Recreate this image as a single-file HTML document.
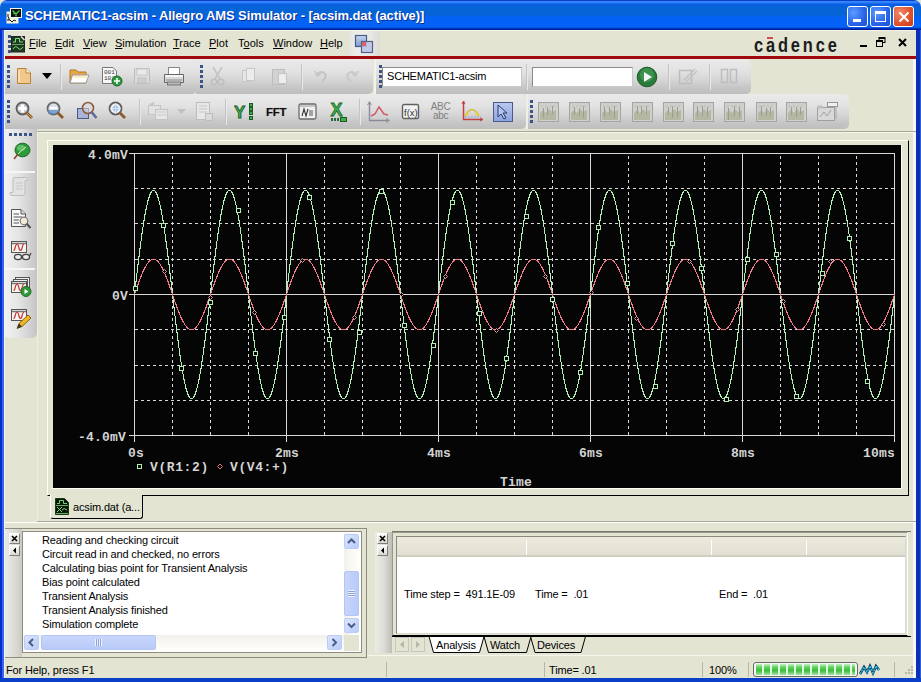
<!DOCTYPE html>
<html><head><meta charset="utf-8">
<style>
*{margin:0;padding:0;box-sizing:border-box}
html,body{width:921px;height:682px;overflow:hidden;background:#E3E4D2;font-family:"Liberation Sans",sans-serif;font-size:12px;color:#000}
.a{position:absolute}
#title{left:0;top:0;width:921px;height:30px;background:linear-gradient(#0A3EC8 0px,#0A3EC8 1px,#3A8CFF 1px,#2A7AF8 3px,#0A5CE8 4px,#0664D6 7px,#0664D6 15px,#0562F6 17px,#0562F6 27px,#0848D8 28px,#00209A 29px,#00209A 30px);border-radius:7px 7px 0 0}
#ttext{left:25px;top:8px;color:#fff;font-weight:bold;font-size:13px;letter-spacing:-0.1px;text-shadow:1px 1px 0 #0A2E8A;white-space:nowrap}
.wb{top:6px;width:21px;height:21px;border:1px solid #fff;border-radius:3px;background:radial-gradient(circle at 30% 30%,#5B9BFF,#2A63E8 60%,#1C4FD0)}
#bleft{left:0;top:30px;width:4px;height:652px;background:linear-gradient(90deg,#0030C8 0,#0030C8 2px,#3A64F0 2px,#3A64F0 4px)}
#bright{left:913px;top:30px;width:8px;height:652px;background:linear-gradient(90deg,#F4F6F8 0,#F4F6F8 3px,#0A30B8 3px,#0A30B8 7px,#3060D0 7px)}
#bbot{left:0;top:678px;width:921px;height:4px;background:#0B3FC8}
#menu{left:4px;top:30px;width:912px;height:26px;background:#E3E4D2}
.mi{top:37px;font-size:11px;white-space:nowrap}
.mi u{text-decoration:underline}
#redline{left:4px;top:56px;width:912px;height:3px;background:#A00A0E}
.tb{background:linear-gradient(#EAEAEA,#E2E2E2 35%,#D4D4D4 62%,#C6C6C6 82%,#BEBEBE);border-radius:0 4px 4px 0}
.grip{width:3px;background:repeating-linear-gradient(#3A5488 0 3px,transparent 3px 5px)}
.hgrip{height:3px;background:repeating-linear-gradient(90deg,#3A5488 0 3px,transparent 3px 5px)}
.sep{width:2px;background:linear-gradient(90deg,#C4C4C4 0 1px,#E8E8E8 1px 2px)}
.ico{position:absolute}
.plotlbl{font-family:"Liberation Mono",monospace;font-weight:bold;font-size:13px;letter-spacing:0.2px;line-height:13px;color:#D4D4D4;white-space:nowrap}
.log{font-size:11px;line-height:14px;letter-spacing:-0.15px;white-space:nowrap}
</style></head><body>
<!-- Title bar -->
<div id="title" class="a"></div>
<svg class="a" style="left:6px;top:8px" width="16" height="16"><rect x="0.5" y="3.5" width="12" height="12" fill="#F4F4D8"/><path d="M2 6 V9 L3 10 V12 M1 12 H4 L6 14 L8 12 L10 13" stroke="#111" fill="none"/><rect x="4.5" y="0.5" width="11" height="9" fill="#111" stroke="#F4F4F4"/><path d="M6.5 2.5 L10 6 L13.5 2.5 M10 6 V8.5 M7.5 5 L8.5 6" stroke="#4EC84E" stroke-width="1.3" fill="none"/></svg>
<div id="ttext" class="a">SCHEMATIC1-acsim - Allegro AMS Simulator - [acsim.dat (active)]</div>
<div class="a wb" style="left:847px"><div class="a" style="left:5px;top:12px;width:8px;height:3px;background:#fff"></div></div>
<div class="a wb" style="left:870px"><div class="a" style="left:4px;top:4px;width:11px;height:11px;border:1px solid #fff;border-top-width:3px"></div></div>
<div class="a wb" style="left:893px;background:radial-gradient(circle at 30% 30%,#F08A6A,#E0502A 60%,#C8381A)"><svg class="a" style="left:4px;top:4px" width="12" height="12"><path d="M1.5 1.5 L10.5 10.5 M10.5 1.5 L1.5 10.5" stroke="#fff" stroke-width="2"/></svg></div>
<div id="bleft" class="a"></div>
<div id="bright" class="a"></div>
<div id="bbot" class="a"></div>

<!-- Menu -->
<div id="menu" class="a"></div>
<div class="a" style="left:4px;top:30px;width:912px;height:1px;background:#F4F3EC"></div>
<div class="a grip" style="left:8px;top:35px;height:19px"></div>
<svg class="a" style="left:11px;top:36px" width="15" height="17"><rect x="0.5" y="0.5" width="13" height="15.5" fill="#1E3A1E" stroke="#222"/><path d="M10 0.5 L13.5 4" stroke="#E3E4D2" stroke-width="1.5"/><path d="M2 6 H4.5 V2.5 H8.5 V6 H12" stroke="#7EE07E" fill="none"/><path d="M2 13 Q4.5 9 7 12 T12 11" stroke="#7EE07E" fill="none"/><path d="M1 8.5 H13" stroke="#8C8" stroke-width="0.7"/></svg>
<div class="a mi" style="left:29px"><u>F</u>ile</div>
<div class="a mi" style="left:55px"><u>E</u>dit</div>
<div class="a mi" style="left:83px"><u>V</u>iew</div>
<div class="a mi" style="left:115px"><u>S</u>imulation</div>
<div class="a mi" style="left:173px"><u>T</u>race</div>
<div class="a mi" style="left:209px"><u>P</u>lot</div>
<div class="a mi" style="left:238px">T<u>o</u>ols</div>
<div class="a mi" style="left:273px"><u>W</u>indow</div>
<div class="a mi" style="left:320px"><u>H</u>elp</div>
<div class="a" style="left:349px;top:31px;width:31px;height:25px;background:linear-gradient(90deg,#E6E6E0,#EDEDEA 30%,#E8E8E4 70%,#DCDCD6)"></div>
<svg class="a" style="left:354px;top:34px" width="20" height="20"><defs><linearGradient id="sq" x1="0" y1="0" x2="0" y2="1"><stop offset="0" stop-color="#C8D8F0"/><stop offset="1" stop-color="#7A9AD0"/></linearGradient></defs><rect x="1.5" y="1.5" width="11" height="11" fill="url(#sq)" stroke="#4A5A88" stroke-width="1.2"/><rect x="7.5" y="7.5" width="11" height="11" fill="#B8C4E8" fill-opacity="0.85" stroke="#585E88" stroke-width="1.2"/><rect x="8" y="8" width="4" height="4" fill="#E06070"/></svg>
<div class="a" style="left:754px;top:34px;font-size:20px;font-weight:bold;letter-spacing:3.5px;color:#1C1C1C;line-height:23px;transform:scaleX(0.82);transform-origin:0 0">cadence</div>
<div class="a" style="left:767px;top:37px;width:6px;height:2px;background:#D84848"></div>
<div class="a" style="left:860px;top:45px;width:7px;height:2px;background:#000"></div>
<svg class="a" style="left:876px;top:37px" width="10" height="10"><rect x="3" y="0.5" width="6" height="5" fill="none" stroke="#000"/><rect x="0.5" y="3.5" width="6" height="6" fill="#E3E4D2" stroke="#000"/><path d="M0.5 4.5 H6.5 M3 1.5 H9" stroke="#000"/></svg>
<svg class="a" style="left:898px;top:38px" width="9" height="9"><path d="M1 1 L8 8 M8 1 L1 8" stroke="#000" stroke-width="2"/></svg>
<div id="redline" class="a"></div>

<!-- Row 1 bands -->
<div class="a tb" style="left:5px;top:59px;width:191px;height:35px"></div>
<div class="a tb" style="left:196px;top:59px;width:177px;height:35px;border-radius:0 5px 5px 0"></div>
<div class="a" style="left:374px;top:59px;width:2px;height:35px;background:#F4F3EA"></div>
<div class="a tb" style="left:376px;top:59px;width:375px;height:35px;border-radius:0 5px 5px 0"></div>
<div class="a grip" style="left:7px;top:65px;height:25px"></div>
<div class="a grip" style="left:200px;top:65px;height:25px"></div>
<div class="a grip" style="left:379px;top:65px;height:25px"></div>
<div class="a sep" style="left:60px;top:64px;height:26px"></div>
<div class="a sep" style="left:301px;top:64px;height:26px"></div>
<div class="a sep" style="left:526px;top:64px;height:26px"></div>
<div class="a sep" style="left:668px;top:64px;height:26px"></div>
<div class="a sep" style="left:709px;top:64px;height:26px"></div>
<!-- new -->
<svg class="a" style="left:16px;top:67px" width="16" height="18"><path d="M1.5 1.5 H10 L14.5 6 V16.5 H1.5 Z" fill="#F2C98A" stroke="#B8843A"/><path d="M10 1.5 V6 H14.5" fill="#FFF4D8" stroke="#B8843A"/><path d="M3 3 V15" stroke="#FBE3B8" stroke-width="1.5"/></svg>
<svg class="a" style="left:42px;top:72px" width="10" height="8"><path d="M0 1 H10 L5 7 Z" fill="#000"/></svg>
<!-- open -->
<svg class="a" style="left:69px;top:67px" width="21" height="18"><path d="M1 3 H7 L9 5 H17 V16 H1 Z" fill="#E8A848" stroke="#B07820"/><path d="M3.5 8 H20 L17 16 H1 Z" fill="#FFFFFF" stroke="#9A9A9A"/><path d="M5 10 H18" stroke="#F8D890"/></svg>
<!-- binary doc -->
<svg class="a" style="left:101px;top:66px" width="22" height="21"><path d="M1.5 1.5 H12 L15.5 5 V17.5 H1.5 Z" fill="#F8F8F8" stroke="#777"/><text x="3" y="8" font-size="6" font-family="Liberation Mono" fill="#333">001</text><text x="3" y="14" font-size="6" font-family="Liberation Mono" fill="#333">101</text><circle cx="16" cy="15" r="5" fill="#2E9A3E" stroke="#1A6A2A"/><path d="M16 12 V18 M13 15 H19" stroke="#fff" stroke-width="1.6"/></svg>
<!-- save disabled -->
<svg class="a" style="left:133px;top:67px" width="18" height="18"><rect x="1.5" y="1.5" width="15" height="15" rx="1" fill="#DCDCDC" stroke="#BDBDBD"/><rect x="4" y="2" width="10" height="6" fill="#EAEAEA" stroke="#C8C8C8"/><rect x="5" y="11" width="8" height="5" fill="#CFCFCF" stroke="#C0C0C0"/></svg>
<!-- printer -->
<svg class="a" style="left:163px;top:66px" width="22" height="20"><rect x="5.5" y="1.5" width="11" height="7" fill="#FFF" stroke="#888"/><path d="M1.5 8.5 H20.5 V16.5 H1.5 Z" fill="#D8D8D8" stroke="#666"/><rect x="2" y="9" width="18" height="2" fill="#F4F4F4"/><path d="M3 14 H19" stroke="#888"/><rect x="4.5" y="16" width="13" height="3" fill="#B8B8B8" stroke="#777"/></svg>
<!-- cut disabled -->
<svg class="a" style="left:209px;top:66px" width="17" height="20"><path d="M4 1 L11 13 M13 1 L6 13" stroke="#C4C4C4" stroke-width="1.5" fill="none"/><circle cx="5" cy="16" r="2.8" fill="none" stroke="#BEBEBE" stroke-width="1.5"/><circle cx="12" cy="16" r="2.8" fill="none" stroke="#BEBEBE" stroke-width="1.5"/></svg>
<!-- copy disabled -->
<svg class="a" style="left:242px;top:67px" width="14" height="18"><rect x="0.5" y="3.5" width="8" height="11" fill="#E6E6E6" stroke="#C6C6C6"/><rect x="4.5" y="1.5" width="8" height="12" fill="#ECECEC" stroke="#C6C6C6"/></svg>
<!-- paste disabled -->
<svg class="a" style="left:271px;top:66px" width="17" height="20"><rect x="1.5" y="3.5" width="12" height="15" fill="#D2D2D2" stroke="#BDBDBD"/><rect x="7.5" y="7.5" width="8" height="10" fill="#EDEDED" stroke="#C4C4C4"/></svg>
<!-- undo/redo disabled -->
<svg class="a" style="left:314px;top:69px" width="14" height="14"><path d="M3 5 Q8 1 11 5 Q13 9 8 12" stroke="#C4C4C4" stroke-width="2" fill="none"/><path d="M1 2 L3 7 L7 5" stroke="#C4C4C4" stroke-width="1.5" fill="none"/></svg>
<svg class="a" style="left:344px;top:69px" width="15" height="14"><path d="M12 5 Q7 1 4 5 Q2 9 7 12" stroke="#C8C8C8" stroke-width="2" fill="none"/><path d="M14 2 L12 7 L8 5" stroke="#C8C8C8" stroke-width="1.5" fill="none"/></svg>
<!-- text boxes -->
<div class="a" style="left:382px;top:67px;width:140px;height:20px;background:#fff;border:1px solid #8A8A8A;border-right-color:#C8C8C8;border-bottom-color:#C8C8C8"></div>
<div class="a" style="left:387px;top:70px;font-size:11px;letter-spacing:-0.2px;white-space:nowrap">SCHEMATIC1-acsim</div>
<div class="a" style="left:532px;top:67px;width:101px;height:20px;background:#fff;border:1px solid #8A8A8A;border-right-color:#C8C8C8;border-bottom-color:#C8C8C8"></div>
<!-- run -->
<svg class="a" style="left:636px;top:66px" width="22" height="22"><circle cx="11" cy="11" r="9.8" fill="#2A7A3A" stroke="#1E5A2A"/><circle cx="11" cy="9" r="7" fill="#4AA25A" opacity="0.6"/><path d="M8 6 L16 11 L8 16 Z" fill="#F4F4F4"/></svg>
<!-- disabled -->
<svg class="a" style="left:678px;top:67px" width="20" height="19"><rect x="1.5" y="3.5" width="12" height="13" fill="none" stroke="#BDBDBD" stroke-width="1.5"/><path d="M6 13 L17 2 M8 15 L19 4" stroke="#C2C2C2" stroke-width="1.5"/></svg>
<svg class="a" style="left:720px;top:68px" width="18" height="17"><rect x="1.5" y="1.5" width="6" height="13" fill="none" stroke="#BDBDBD" stroke-width="1.5"/><rect x="10.5" y="1.5" width="6" height="13" fill="none" stroke="#BDBDBD" stroke-width="1.5"/></svg>

<!-- Row 2 bands -->
<div class="a tb" style="left:5px;top:94px;width:521px;height:35px;border-radius:0 5px 5px 0"></div>
<div class="a" style="left:526px;top:94px;width:3px;height:35px;background:#F0EFE6"></div>
<div class="a tb" style="left:528px;top:94px;width:321px;height:35px;border-radius:0 5px 5px 0"></div>
<div class="a grip" style="left:7px;top:100px;height:25px"></div>
<div class="a grip" style="left:530px;top:100px;height:25px"></div>
<div class="a sep" style="left:139px;top:99px;height:26px"></div>
<div class="a sep" style="left:225px;top:99px;height:26px"></div>
<div class="a sep" style="left:359px;top:99px;height:26px"></div>
<!-- zoom icons -->
<svg class="a" style="left:15px;top:101px" width="19" height="19"><circle cx="7.5" cy="7.5" r="6" fill="#C8CCD0" stroke="#606060" stroke-width="1.8"/><path d="M7.5 3.5 V11.5 M3.5 7.5 H11.5" stroke="#FFF" stroke-width="3"/><path d="M11.5 11.5 L17 17" stroke="#8A5A2A" stroke-width="2.8"/><path d="M12 12 L17 17" stroke="#D89A50" stroke-width="1"/></svg>
<svg class="a" style="left:46px;top:101px" width="19" height="19"><circle cx="7.5" cy="7.5" r="6" fill="#D8E0EA" stroke="#6A6A6A" stroke-width="1.8"/><path d="M2 9 H13 V13 H2 Z" fill="#5A8ACA" opacity="0.7"/><path d="M4 7 H11" stroke="#fff" stroke-width="2"/><path d="M11.5 11.5 L17 17" stroke="#8A5A2A" stroke-width="2.8"/></svg>
<svg class="a" style="left:76px;top:101px" width="22" height="21"><rect x="1.5" y="7.5" width="11" height="10" fill="#A8B4D8" stroke="#4A5A8A"/><circle cx="12" cy="7" r="5.5" fill="#D8D8E0" fill-opacity="0.6" stroke="#8A5A3A" stroke-width="1.6"/><path d="M15.5 11 L20.5 17" stroke="#5A6A9A" stroke-width="2.6"/></svg>
<svg class="a" style="left:108px;top:101px" width="19" height="19"><circle cx="7.5" cy="7.5" r="6" fill="#F0F2F4" stroke="#606060" stroke-width="1.8"/><path d="M7.5 3 L11 7.5 L7.5 12 L4 7.5 Z" fill="#9CC0E8"/><path d="M7.5 2 V13 M2 7.5 H13" stroke="#D8E4F0" stroke-width="1"/><path d="M11.5 11.5 L17 17" stroke="#8A5A2A" stroke-width="2.8"/></svg>
<!-- copy disabled -->
<svg class="a" style="left:147px;top:102px" width="23" height="19"><path d="M3 3 L7 1" stroke="#C6C6C6" stroke-width="2"/><rect x="1.5" y="3.5" width="12" height="9" fill="#E2E2E2" stroke="#C4C4C4"/><rect x="8.5" y="7.5" width="12" height="10" fill="#E6E6E6" stroke="#C4C4C4"/><path d="M10 10 H19 M10 13 H19" stroke="#CACACA"/></svg>
<svg class="a" style="left:177px;top:109px" width="10" height="6"><path d="M0 0 H9 L4.5 5 Z" fill="#C0C0C0"/></svg>
<svg class="a" style="left:195px;top:101px" width="19" height="21"><rect x="1.5" y="1.5" width="13" height="17" fill="#E8E8E8" stroke="#BDBDBD"/><path d="M4 5 H12 M4 8 H12 M4 11 H12" stroke="#C6C6C6"/><rect x="10.5" y="12.5" width="7" height="7" fill="#DADADA" stroke="#BDBDBD"/></svg>
<!-- Y! -->
<svg class="a" style="left:234px;top:102px" width="22" height="20"><text x="0" y="16" font-family="Liberation Sans" font-weight="bold" font-size="17" fill="#3CB04A" stroke="#1E5A26" stroke-width="0.8">Y</text><rect x="15.5" y="1.5" width="3" height="3" fill="#3CB04A" stroke="#1E5A26"/><rect x="15.5" y="5.5" width="3" height="3" fill="#3CB04A" stroke="#1E5A26"/><rect x="15.5" y="9.5" width="3" height="3" fill="#3CB04A" stroke="#1E5A26"/><rect x="15.5" y="14.5" width="3" height="3" fill="#3CB04A" stroke="#1E5A26"/></svg>
<!-- FFT -->
<div class="a" style="left:266px;top:106px;font-weight:bold;font-size:11.5px;color:#111;letter-spacing:-0.3px;text-shadow:0 0 1px #888">FFT</div>
<!-- N= -->
<svg class="a" style="left:298px;top:103px" width="19" height="17"><rect x="1" y="1" width="17" height="15" rx="1.5" fill="#F0F0F0" stroke="#6A6A6A" stroke-width="1.3"/><path d="M2 3 H17" stroke="#9A9A9A"/><path d="M4 13 L6 6 L8 13 L10 6" stroke="#333" stroke-width="1.1" fill="none"/><path d="M11 8 H15 M11 10 H15 M11 12 H15" stroke="#555"/></svg>
<!-- X -->
<svg class="a" style="left:329px;top:100px" width="18" height="23"><text x="1.5" y="15.5" font-family="Liberation Sans" font-weight="bold" font-size="18" fill="#3CB04A" stroke="#1E6A2A" stroke-width="0.8">X</text><rect x="2" y="18" width="2" height="3" fill="#2A6A3A"/><rect x="5" y="18" width="2" height="3" fill="#2A6A3A"/><rect x="8" y="18" width="2" height="3" fill="#2A6A3A"/><rect x="11.5" y="17.5" width="6" height="4" fill="#3CB04A" stroke="#1E5A26"/></svg>
<!-- chart -->
<svg class="a" style="left:367px;top:101px" width="24" height="22"><path d="M2.5 2 V19.5 H21" stroke="#8A8A98" stroke-width="1.4" fill="none"/><path d="M0.5 4 L2.5 0.5 L4.5 4 M19 17.5 L22.5 19.5 L19 21.5" stroke="#8A8A98" fill="none"/><path d="M4 15 L8 13 L12 6 L17 13 L21 14" stroke="#D05868" stroke-width="1.5" fill="none"/></svg>
<!-- f(x) -->
<svg class="a" style="left:401px;top:103px" width="19" height="17"><rect x="1.5" y="1.5" width="16" height="14" rx="1.5" fill="#F2F2F2" stroke="#606060" stroke-width="1.4"/><text x="3" y="12.5" font-size="9.5" font-family="Liberation Sans" fill="#333">f(x)</text></svg>
<!-- ABC abc -->
<div class="a" style="left:430px;top:102px;font-size:10px;line-height:9px;color:#7E7E7E;text-align:center;width:21px;letter-spacing:-0.3px">ABC<br>abc</div>
<!-- chart2 -->
<svg class="a" style="left:461px;top:101px" width="23" height="21"><path d="M2.5 1 V18.5 H21" stroke="#C04040" stroke-width="1.5" fill="none"/><path d="M1 3 L2.5 0 L4 3 M19 17 L22 18.5 L19 20" stroke="#C04040" fill="none"/><path d="M4 15 Q11 2 18 15" stroke="#D4C040" stroke-width="1.5" fill="none"/><circle cx="6" cy="13" r="1.6" fill="#E8D040"/><circle cx="16" cy="13" r="1.6" fill="#E8D040"/><path d="M4 16 H20" stroke="#8AA0E0" stroke-dasharray="2,1"/></svg>
<!-- pointer selected -->
<div class="a" style="left:493px;top:102px;width:20px;height:20px;background:linear-gradient(#B8C8F0,#8EA4E0);border:1px solid #4A5A8A"></div>
<svg class="a" style="left:496px;top:104px" width="14" height="16"><path d="M2 1 V13 L5 10 L8 15 L10 14 L7 9 L11 9 Z" fill="#B8C4F0" stroke="#2A3A6A"/></svg>
<!-- disabled waveform boxes -->
<svg class="a" style="left:538px;top:102px" width="21" height="20"><rect x="0.5" y="0.5" width="20" height="19" fill="#CFCFCB" stroke="#A4A4A4"/><path d="M2 18 V11 L5 8 L8 11 L11 7 L14 10 L18 8 V18 Z" fill="#B4B8A0"/><rect x="5" y="6" width="1" height="10" fill="#9C9C98"/><rect x="9" y="5" width="1" height="8" fill="#9C9C98"/><rect x="14" y="4" width="1" height="8" fill="#9C9C98"/><path d="M3 4 H17" stroke="#B8B8B4" stroke-dasharray="2,2"/></svg>
<svg class="a" style="left:569px;top:102px" width="21" height="20"><rect x="0.5" y="0.5" width="20" height="19" fill="#CFCFCB" stroke="#A4A4A4"/><path d="M2 18 V11 L5 8 L8 11 L11 7 L14 10 L18 8 V18 Z" fill="#B4B8A0"/><rect x="5" y="5" width="1" height="8" fill="#9C9C98"/><rect x="10" y="6" width="1" height="8" fill="#9C9C98"/><rect x="14" y="4" width="1" height="12" fill="#9C9C98"/><path d="M3 4 H17" stroke="#B8B8B4" stroke-dasharray="2,2"/></svg>
<svg class="a" style="left:600px;top:102px" width="21" height="20"><rect x="0.5" y="0.5" width="20" height="19" fill="#CFCFCB" stroke="#A4A4A4"/><path d="M2 18 V11 L5 8 L8 11 L11 7 L14 10 L18 8 V18 Z" fill="#B4B8A0"/><rect x="4" y="5" width="1" height="10" fill="#9C9C98"/><rect x="9" y="5" width="1" height="8" fill="#9C9C98"/><rect x="14" y="4" width="1" height="12" fill="#9C9C98"/><path d="M3 4 H17" stroke="#B8B8B4" stroke-dasharray="2,2"/></svg>
<svg class="a" style="left:632px;top:102px" width="21" height="20"><rect x="0.5" y="0.5" width="20" height="19" fill="#CFCFCB" stroke="#A4A4A4"/><path d="M2 18 V11 L5 8 L8 11 L11 7 L14 10 L18 8 V18 Z" fill="#B4B8A0"/><rect x="5" y="4" width="1" height="8" fill="#9C9C98"/><rect x="9" y="4" width="1" height="8" fill="#9C9C98"/><rect x="14" y="4" width="1" height="8" fill="#9C9C98"/><path d="M3 4 H17" stroke="#B8B8B4" stroke-dasharray="2,2"/></svg>
<svg class="a" style="left:663px;top:102px" width="21" height="20"><rect x="0.5" y="0.5" width="20" height="19" fill="#CFCFCB" stroke="#A4A4A4"/><path d="M2 18 V11 L5 8 L8 11 L11 7 L14 10 L18 8 V18 Z" fill="#B4B8A0"/><rect x="5" y="5" width="1" height="8" fill="#9C9C98"/><rect x="9" y="4" width="1" height="12" fill="#9C9C98"/><rect x="14" y="5" width="1" height="10" fill="#9C9C98"/><path d="M3 4 H17" stroke="#B8B8B4" stroke-dasharray="2,2"/></svg>
<svg class="a" style="left:693px;top:102px" width="21" height="20"><rect x="0.5" y="0.5" width="20" height="19" fill="#CFCFCB" stroke="#A4A4A4"/><path d="M2 18 V11 L5 8 L8 11 L11 7 L14 10 L18 8 V18 Z" fill="#B4B8A0"/><rect x="4" y="5" width="1" height="10" fill="#9C9C98"/><rect x="9" y="4" width="1" height="10" fill="#9C9C98"/><rect x="14" y="5" width="1" height="10" fill="#9C9C98"/><path d="M3 4 H17" stroke="#B8B8B4" stroke-dasharray="2,2"/></svg>
<svg class="a" style="left:724px;top:102px" width="21" height="20"><rect x="0.5" y="0.5" width="20" height="19" fill="#CFCFCB" stroke="#A4A4A4"/><path d="M2 18 V11 L5 8 L8 11 L11 7 L14 10 L18 8 V18 Z" fill="#B4B8A0"/><rect x="4" y="6" width="1" height="12" fill="#9C9C98"/><rect x="10" y="4" width="1" height="10" fill="#9C9C98"/><rect x="15" y="5" width="1" height="10" fill="#9C9C98"/><path d="M3 4 H17" stroke="#B8B8B4" stroke-dasharray="2,2"/></svg>
<svg class="a" style="left:756px;top:102px" width="21" height="20"><rect x="0.5" y="0.5" width="20" height="19" fill="#CFCFCB" stroke="#A4A4A4"/><path d="M2 18 V11 L5 8 L8 11 L11 7 L14 10 L18 8 V18 Z" fill="#B4B8A0"/><rect x="5" y="4" width="1" height="10" fill="#9C9C98"/><rect x="10" y="6" width="1" height="8" fill="#9C9C98"/><rect x="14" y="5" width="1" height="8" fill="#9C9C98"/><path d="M3 4 H17" stroke="#B8B8B4" stroke-dasharray="2,2"/></svg>
<svg class="a" style="left:786px;top:102px" width="21" height="20"><rect x="0.5" y="0.5" width="20" height="19" fill="#CFCFCB" stroke="#A4A4A4"/><path d="M2 18 V11 L5 8 L8 11 L11 7 L14 10 L18 8 V18 Z" fill="#B4B8A0"/><rect x="5" y="5" width="1" height="8" fill="#9C9C98"/><rect x="10" y="5" width="1" height="10" fill="#9C9C98"/><rect x="14" y="5" width="1" height="8" fill="#9C9C98"/><path d="M3 4 H17" stroke="#B8B8B4" stroke-dasharray="2,2"/></svg>
<svg class="a" style="left:817px;top:101px" width="22" height="21"><rect x="0.5" y="6.5" width="17" height="13" fill="#D8D8D8" stroke="#A0A0A0"/><rect x="10.5" y="1.5" width="10" height="4" fill="#F0F0F0" stroke="#989898"/><path d="M3 16 L7 11 L10 15 L14 9" stroke="#A0A0A0" fill="none"/><rect x="0.5" y="4.5" width="5" height="3" fill="#C0C0C0"/><path d="M19 6 V18" stroke="#A8A8A8"/></svg>


<!-- left vertical toolbar -->
<div class="a" style="left:4px;top:129px;width:33px;height:209px;background:linear-gradient(90deg,#F2F2F2,#E4E4E4 45%,#CDCDCD 85%,#C4C4C4);border-radius:0 0 5px 5px"></div>
<div class="a hgrip" style="left:9px;top:133px;width:25px"></div>
<div class="a" style="left:5px;top:171px;width:30px;height:2px;background:#F6F6F6"></div>
<div class="a" style="left:5px;top:268px;width:30px;height:2px;background:#F6F6F6"></div>
<!-- leaf -->
<svg class="a" style="left:12px;top:142px" width="19" height="18"><ellipse cx="10.5" cy="8" rx="7.5" ry="6.8" fill="#2E9A3A" stroke="#1A6A22"/><ellipse cx="9" cy="6" rx="4" ry="3" fill="#7AD07A" opacity="0.7"/><path d="M6 12 L2 17" stroke="#8A3A2A" stroke-width="1.5"/><path d="M6 12 Q10 8 14 5" stroke="#C8F0C8" fill="none"/></svg>
<!-- scroll disabled -->
<svg class="a" style="left:9px;top:176px" width="20" height="21"><path d="M5 1.5 H17 Q19 1.5 19 4 V4.5 H16 V17 Q16 19.5 13 19.5 H3 Q1 19.5 1 17 V16.5 H4 V4 Q4 1.5 5 1.5" fill="#E2E2E2" stroke="#BEBEBE"/><path d="M7 7 H14 M7 10 H14 M7 13 H14" stroke="#C6C6C6"/></svg>
<!-- doc + magnifier -->
<svg class="a" style="left:10px;top:208px" width="22" height="22"><path d="M1.5 1.5 H11 L15.5 6 V18.5 H1.5 Z" fill="#F8F8F8" stroke="#555"/><path d="M11 1.5 V6 H15.5" fill="#DDD" stroke="#555"/><path d="M3.5 6 H9 M3.5 9 H12 M3.5 12 H9 M3.5 15 H9" stroke="#555"/><circle cx="14" cy="13" r="3.8" fill="#F0EAD8" stroke="#777" stroke-width="1.2"/><path d="M16.5 15.5 L20.5 20" stroke="#555" stroke-width="2.2"/></svg>
<!-- glasses -->
<svg class="a" style="left:10px;top:240px" width="22" height="22"><rect x="1.5" y="1.5" width="15" height="11" fill="#F6F4F0" stroke="#555"/><path d="M2 3.5 H16" stroke="#777" stroke-width="1.5"/><path d="M3.5 10.5 C5.5 10.5 5 4 7 4 S 8.5 10.5 10.5 10.5 S 12 4 14 4" stroke="#C83838" stroke-width="1.2" fill="none"/><ellipse cx="8" cy="17" rx="3.5" ry="2.6" fill="#EEE" stroke="#444" stroke-width="1.3"/><ellipse cx="16" cy="17" rx="3.5" ry="2.6" fill="#EEE" stroke="#444" stroke-width="1.3"/><path d="M11.5 16 H12.5 M19.5 16 L21 13" stroke="#444" stroke-width="1.3"/></svg>
<!-- stacked with play -->
<svg class="a" style="left:10px;top:276px" width="22" height="21"><rect x="5.5" y="1.5" width="14" height="10" fill="#EEE" stroke="#555"/><rect x="3.5" y="3.5" width="14" height="10" fill="#EEE" stroke="#555"/><rect x="1.5" y="5.5" width="15" height="11" fill="#F6F4F0" stroke="#555"/><path d="M2 7.5 H16" stroke="#777" stroke-width="1.5"/><path d="M3.5 14.5 C5.5 14.5 5 8 7 8 S 8.5 14.5 10.5 14.5 S 12 8 14 8" stroke="#C83838" stroke-width="1.2" fill="none"/><circle cx="16" cy="15.5" r="5" fill="#2E9A3A" stroke="#1A6A22"/><path d="M14.5 13 L18.5 15.5 L14.5 18 Z" fill="#fff"/></svg>
<!-- pencil -->
<svg class="a" style="left:10px;top:308px" width="22" height="22"><rect x="1.5" y="1.5" width="15" height="11" fill="#F6F4F0" stroke="#555"/><path d="M2 3.5 H16" stroke="#777" stroke-width="1.5"/><path d="M3.5 10.5 C5.5 10.5 5 4 7 4 S 8.5 10.5 10.5 10.5 S 12 4 14 4" stroke="#C83838" stroke-width="1.2" fill="none"/><path d="M7 20.5 L9 15.5 L18 7 L21 10 L12 18.5 Z" fill="#F0B820" stroke="#8A6010"/><path d="M7 20.5 L9 15.5 L12 18.5 Z" fill="#333"/></svg>


<!-- MDI client sunken edge -->
<div class="a" style="left:37px;top:131px;width:879px;height:1px;background:#A8A898"></div>
<div class="a" style="left:37px;top:132px;width:876px;height:1px;background:#F6F6EA"></div>
<div class="a" style="left:37px;top:132px;width:1px;height:389px;background:#EEEEE2"></div>
<!-- MDI child -->
<div class="a" style="left:47px;top:140px;width:862px;height:356px;background:#E3E4D2;border-left:1px solid #FFFFF4;border-top:1px solid #FFFFF4;border-right:1px solid #000;border-bottom:1px solid #000"></div>
<div class="a" style="left:52px;top:144px;width:850px;height:345px;border-right:1px solid #FFFFF6;border-bottom:1px solid #FFFFF6"></div>
<div class="a" style="left:53px;top:145px;width:848px;height:343px;background:#050505"></div>
<svg class="a" style="left:0;top:0" width="921" height="682" viewBox="0 0 921 682">
<g shape-rendering="crispEdges"><line x1="172.5" y1="154" x2="172.5" y2="435" stroke="#D8D8D8" stroke-dasharray="3,3" stroke-dashoffset="4"/><line x1="210.5" y1="154" x2="210.5" y2="435" stroke="#D8D8D8" stroke-dasharray="3,3" stroke-dashoffset="4"/><line x1="248.5" y1="154" x2="248.5" y2="435" stroke="#D8D8D8" stroke-dasharray="3,3" stroke-dashoffset="4"/><line x1="286.5" y1="153" x2="286.5" y2="442" stroke="#D8D8D8"/><line x1="324.5" y1="154" x2="324.5" y2="435" stroke="#D8D8D8" stroke-dasharray="3,3" stroke-dashoffset="4"/><line x1="362.5" y1="154" x2="362.5" y2="435" stroke="#D8D8D8" stroke-dasharray="3,3" stroke-dashoffset="4"/><line x1="400.5" y1="154" x2="400.5" y2="435" stroke="#D8D8D8" stroke-dasharray="3,3" stroke-dashoffset="4"/><line x1="438.5" y1="153" x2="438.5" y2="442" stroke="#D8D8D8"/><line x1="476.5" y1="154" x2="476.5" y2="435" stroke="#D8D8D8" stroke-dasharray="3,3" stroke-dashoffset="4"/><line x1="514.5" y1="154" x2="514.5" y2="435" stroke="#D8D8D8" stroke-dasharray="3,3" stroke-dashoffset="4"/><line x1="552.5" y1="154" x2="552.5" y2="435" stroke="#D8D8D8" stroke-dasharray="3,3" stroke-dashoffset="4"/><line x1="590.5" y1="153" x2="590.5" y2="442" stroke="#D8D8D8"/><line x1="628.5" y1="154" x2="628.5" y2="435" stroke="#D8D8D8" stroke-dasharray="3,3" stroke-dashoffset="4"/><line x1="666.5" y1="154" x2="666.5" y2="435" stroke="#D8D8D8" stroke-dasharray="3,3" stroke-dashoffset="4"/><line x1="704.5" y1="154" x2="704.5" y2="435" stroke="#D8D8D8" stroke-dasharray="3,3" stroke-dashoffset="4"/><line x1="742.5" y1="153" x2="742.5" y2="442" stroke="#D8D8D8"/><line x1="780.5" y1="154" x2="780.5" y2="435" stroke="#D8D8D8" stroke-dasharray="3,3" stroke-dashoffset="4"/><line x1="818.5" y1="154" x2="818.5" y2="435" stroke="#D8D8D8" stroke-dasharray="3,3" stroke-dashoffset="4"/><line x1="856.5" y1="154" x2="856.5" y2="435" stroke="#D8D8D8" stroke-dasharray="3,3" stroke-dashoffset="4"/><line x1="135" y1="188.5" x2="894" y2="188.5" stroke="#D8D8D8" stroke-dasharray="3,3"/><line x1="135" y1="223.5" x2="894" y2="223.5" stroke="#D8D8D8" stroke-dasharray="3,3"/><line x1="135" y1="259.5" x2="894" y2="259.5" stroke="#D8D8D8" stroke-dasharray="3,3"/><line x1="129" y1="294.5" x2="895" y2="294.5" stroke="#D8D8D8"/><line x1="135" y1="329.5" x2="894" y2="329.5" stroke="#D8D8D8" stroke-dasharray="3,3"/><line x1="135" y1="365.5" x2="894" y2="365.5" stroke="#D8D8D8" stroke-dasharray="3,3"/><line x1="135" y1="400.5" x2="894" y2="400.5" stroke="#D8D8D8" stroke-dasharray="3,3"/><path d="M129 153.5 H894.5 V442 M895 435.5 H129 M134.5 153 V442" fill="none" stroke="#D8D8D8"/></g>
<path d="M134.50,294.50 L135.00,290.19 L135.50,285.88 L136.00,281.59 L136.50,277.33 L137.00,273.09 L137.50,268.89 L138.00,264.73 L138.50,260.62 L139.00,256.57 L139.50,252.59 L140.00,248.67 L140.50,244.84 L141.00,241.09 L141.50,237.43 L142.00,233.87 L142.50,230.41 L143.00,227.07 L143.50,223.83 L144.00,220.72 L144.50,217.73 L145.00,214.88 L145.50,212.16 L146.00,209.58 L146.50,207.15 L147.00,204.87 L147.50,202.74 L148.00,200.76 L148.50,198.95 L149.00,197.30 L149.50,195.81 L150.00,194.50 L150.50,193.35 L151.00,192.38 L151.50,191.58 L152.00,190.96 L152.50,190.52 L153.00,190.25 L153.50,190.16 L154.00,190.25 L154.50,190.52 L155.00,190.96 L155.50,191.58 L156.00,192.38 L156.50,193.35 L157.00,194.50 L157.50,195.81 L158.00,197.30 L158.50,198.95 L159.00,200.76 L159.50,202.74 L160.00,204.87 L160.50,207.15 L161.00,209.58 L161.50,212.16 L162.00,214.88 L162.50,217.73 L163.00,220.72 L163.50,223.83 L164.00,227.07 L164.50,230.41 L165.00,233.87 L165.50,237.43 L166.00,241.09 L166.50,244.84 L167.00,248.67 L167.50,252.59 L168.00,256.57 L168.50,260.62 L169.00,264.73 L169.50,268.89 L170.00,273.09 L170.50,277.33 L171.00,281.59 L171.50,285.88 L172.00,290.19 L172.50,294.50 L173.00,298.81 L173.50,303.12 L174.00,307.41 L174.50,311.67 L175.00,315.91 L175.50,320.11 L176.00,324.27 L176.50,328.38 L177.00,332.43 L177.50,336.41 L178.00,340.33 L178.50,344.16 L179.00,347.91 L179.50,351.57 L180.00,355.13 L180.50,358.59 L181.00,361.93 L181.50,365.17 L182.00,368.28 L182.50,371.27 L183.00,374.12 L183.50,376.84 L184.00,379.42 L184.50,381.85 L185.00,384.13 L185.50,386.26 L186.00,388.24 L186.50,390.05 L187.00,391.70 L187.50,393.19 L188.00,394.50 L188.50,395.65 L189.00,396.62 L189.50,397.42 L190.00,398.04 L190.50,398.48 L191.00,398.75 L191.50,398.84 L192.00,398.75 L192.50,398.48 L193.00,398.04 L193.50,397.42 L194.00,396.62 L194.50,395.65 L195.00,394.50 L195.50,393.19 L196.00,391.70 L196.50,390.05 L197.00,388.24 L197.50,386.26 L198.00,384.13 L198.50,381.85 L199.00,379.42 L199.50,376.84 L200.00,374.12 L200.50,371.27 L201.00,368.28 L201.50,365.17 L202.00,361.93 L202.50,358.59 L203.00,355.13 L203.50,351.57 L204.00,347.91 L204.50,344.16 L205.00,340.33 L205.50,336.41 L206.00,332.43 L206.50,328.38 L207.00,324.27 L207.50,320.11 L208.00,315.91 L208.50,311.67 L209.00,307.41 L209.50,303.12 L210.00,298.81 L210.50,294.50 L211.00,290.19 L211.50,285.88 L212.00,281.59 L212.50,277.33 L213.00,273.09 L213.50,268.89 L214.00,264.73 L214.50,260.62 L215.00,256.57 L215.50,252.59 L216.00,248.67 L216.50,244.84 L217.00,241.09 L217.50,237.43 L218.00,233.87 L218.50,230.41 L219.00,227.07 L219.50,223.83 L220.00,220.72 L220.50,217.73 L221.00,214.88 L221.50,212.16 L222.00,209.58 L222.50,207.15 L223.00,204.87 L223.50,202.74 L224.00,200.76 L224.50,198.95 L225.00,197.30 L225.50,195.81 L226.00,194.50 L226.50,193.35 L227.00,192.38 L227.50,191.58 L228.00,190.96 L228.50,190.52 L229.00,190.25 L229.50,190.16 L230.00,190.25 L230.50,190.52 L231.00,190.96 L231.50,191.58 L232.00,192.38 L232.50,193.35 L233.00,194.50 L233.50,195.81 L234.00,197.30 L234.50,198.95 L235.00,200.76 L235.50,202.74 L236.00,204.87 L236.50,207.15 L237.00,209.58 L237.50,212.16 L238.00,214.88 L238.50,217.73 L239.00,220.72 L239.50,223.83 L240.00,227.07 L240.50,230.41 L241.00,233.87 L241.50,237.43 L242.00,241.09 L242.50,244.84 L243.00,248.67 L243.50,252.59 L244.00,256.57 L244.50,260.62 L245.00,264.73 L245.50,268.89 L246.00,273.09 L246.50,277.33 L247.00,281.59 L247.50,285.88 L248.00,290.19 L248.50,294.50 L249.00,298.81 L249.50,303.12 L250.00,307.41 L250.50,311.67 L251.00,315.91 L251.50,320.11 L252.00,324.27 L252.50,328.38 L253.00,332.43 L253.50,336.41 L254.00,340.33 L254.50,344.16 L255.00,347.91 L255.50,351.57 L256.00,355.13 L256.50,358.59 L257.00,361.93 L257.50,365.17 L258.00,368.28 L258.50,371.27 L259.00,374.12 L259.50,376.84 L260.00,379.42 L260.50,381.85 L261.00,384.13 L261.50,386.26 L262.00,388.24 L262.50,390.05 L263.00,391.70 L263.50,393.19 L264.00,394.50 L264.50,395.65 L265.00,396.62 L265.50,397.42 L266.00,398.04 L266.50,398.48 L267.00,398.75 L267.50,398.84 L268.00,398.75 L268.50,398.48 L269.00,398.04 L269.50,397.42 L270.00,396.62 L270.50,395.65 L271.00,394.50 L271.50,393.19 L272.00,391.70 L272.50,390.05 L273.00,388.24 L273.50,386.26 L274.00,384.13 L274.50,381.85 L275.00,379.42 L275.50,376.84 L276.00,374.12 L276.50,371.27 L277.00,368.28 L277.50,365.17 L278.00,361.93 L278.50,358.59 L279.00,355.13 L279.50,351.57 L280.00,347.91 L280.50,344.16 L281.00,340.33 L281.50,336.41 L282.00,332.43 L282.50,328.38 L283.00,324.27 L283.50,320.11 L284.00,315.91 L284.50,311.67 L285.00,307.41 L285.50,303.12 L286.00,298.81 L286.50,294.50 L287.00,290.19 L287.50,285.88 L288.00,281.59 L288.50,277.33 L289.00,273.09 L289.50,268.89 L290.00,264.73 L290.50,260.62 L291.00,256.57 L291.50,252.59 L292.00,248.67 L292.50,244.84 L293.00,241.09 L293.50,237.43 L294.00,233.87 L294.50,230.41 L295.00,227.07 L295.50,223.83 L296.00,220.72 L296.50,217.73 L297.00,214.88 L297.50,212.16 L298.00,209.58 L298.50,207.15 L299.00,204.87 L299.50,202.74 L300.00,200.76 L300.50,198.95 L301.00,197.30 L301.50,195.81 L302.00,194.50 L302.50,193.35 L303.00,192.38 L303.50,191.58 L304.00,190.96 L304.50,190.52 L305.00,190.25 L305.50,190.16 L306.00,190.25 L306.50,190.52 L307.00,190.96 L307.50,191.58 L308.00,192.38 L308.50,193.35 L309.00,194.50 L309.50,195.81 L310.00,197.30 L310.50,198.95 L311.00,200.76 L311.50,202.74 L312.00,204.87 L312.50,207.15 L313.00,209.58 L313.50,212.16 L314.00,214.88 L314.50,217.73 L315.00,220.72 L315.50,223.83 L316.00,227.07 L316.50,230.41 L317.00,233.87 L317.50,237.43 L318.00,241.09 L318.50,244.84 L319.00,248.67 L319.50,252.59 L320.00,256.57 L320.50,260.62 L321.00,264.73 L321.50,268.89 L322.00,273.09 L322.50,277.33 L323.00,281.59 L323.50,285.88 L324.00,290.19 L324.50,294.50 L325.00,298.81 L325.50,303.12 L326.00,307.41 L326.50,311.67 L327.00,315.91 L327.50,320.11 L328.00,324.27 L328.50,328.38 L329.00,332.43 L329.50,336.41 L330.00,340.33 L330.50,344.16 L331.00,347.91 L331.50,351.57 L332.00,355.13 L332.50,358.59 L333.00,361.93 L333.50,365.17 L334.00,368.28 L334.50,371.27 L335.00,374.12 L335.50,376.84 L336.00,379.42 L336.50,381.85 L337.00,384.13 L337.50,386.26 L338.00,388.24 L338.50,390.05 L339.00,391.70 L339.50,393.19 L340.00,394.50 L340.50,395.65 L341.00,396.62 L341.50,397.42 L342.00,398.04 L342.50,398.48 L343.00,398.75 L343.50,398.84 L344.00,398.75 L344.50,398.48 L345.00,398.04 L345.50,397.42 L346.00,396.62 L346.50,395.65 L347.00,394.50 L347.50,393.19 L348.00,391.70 L348.50,390.05 L349.00,388.24 L349.50,386.26 L350.00,384.13 L350.50,381.85 L351.00,379.42 L351.50,376.84 L352.00,374.12 L352.50,371.27 L353.00,368.28 L353.50,365.17 L354.00,361.93 L354.50,358.59 L355.00,355.13 L355.50,351.57 L356.00,347.91 L356.50,344.16 L357.00,340.33 L357.50,336.41 L358.00,332.43 L358.50,328.38 L359.00,324.27 L359.50,320.11 L360.00,315.91 L360.50,311.67 L361.00,307.41 L361.50,303.12 L362.00,298.81 L362.50,294.50 L363.00,290.19 L363.50,285.88 L364.00,281.59 L364.50,277.33 L365.00,273.09 L365.50,268.89 L366.00,264.73 L366.50,260.62 L367.00,256.57 L367.50,252.59 L368.00,248.67 L368.50,244.84 L369.00,241.09 L369.50,237.43 L370.00,233.87 L370.50,230.41 L371.00,227.07 L371.50,223.83 L372.00,220.72 L372.50,217.73 L373.00,214.88 L373.50,212.16 L374.00,209.58 L374.50,207.15 L375.00,204.87 L375.50,202.74 L376.00,200.76 L376.50,198.95 L377.00,197.30 L377.50,195.81 L378.00,194.50 L378.50,193.35 L379.00,192.38 L379.50,191.58 L380.00,190.96 L380.50,190.52 L381.00,190.25 L381.50,190.16 L382.00,190.25 L382.50,190.52 L383.00,190.96 L383.50,191.58 L384.00,192.38 L384.50,193.35 L385.00,194.50 L385.50,195.81 L386.00,197.30 L386.50,198.95 L387.00,200.76 L387.50,202.74 L388.00,204.87 L388.50,207.15 L389.00,209.58 L389.50,212.16 L390.00,214.88 L390.50,217.73 L391.00,220.72 L391.50,223.83 L392.00,227.07 L392.50,230.41 L393.00,233.87 L393.50,237.43 L394.00,241.09 L394.50,244.84 L395.00,248.67 L395.50,252.59 L396.00,256.57 L396.50,260.62 L397.00,264.73 L397.50,268.89 L398.00,273.09 L398.50,277.33 L399.00,281.59 L399.50,285.88 L400.00,290.19 L400.50,294.50 L401.00,298.81 L401.50,303.12 L402.00,307.41 L402.50,311.67 L403.00,315.91 L403.50,320.11 L404.00,324.27 L404.50,328.38 L405.00,332.43 L405.50,336.41 L406.00,340.33 L406.50,344.16 L407.00,347.91 L407.50,351.57 L408.00,355.13 L408.50,358.59 L409.00,361.93 L409.50,365.17 L410.00,368.28 L410.50,371.27 L411.00,374.12 L411.50,376.84 L412.00,379.42 L412.50,381.85 L413.00,384.13 L413.50,386.26 L414.00,388.24 L414.50,390.05 L415.00,391.70 L415.50,393.19 L416.00,394.50 L416.50,395.65 L417.00,396.62 L417.50,397.42 L418.00,398.04 L418.50,398.48 L419.00,398.75 L419.50,398.84 L420.00,398.75 L420.50,398.48 L421.00,398.04 L421.50,397.42 L422.00,396.62 L422.50,395.65 L423.00,394.50 L423.50,393.19 L424.00,391.70 L424.50,390.05 L425.00,388.24 L425.50,386.26 L426.00,384.13 L426.50,381.85 L427.00,379.42 L427.50,376.84 L428.00,374.12 L428.50,371.27 L429.00,368.28 L429.50,365.17 L430.00,361.93 L430.50,358.59 L431.00,355.13 L431.50,351.57 L432.00,347.91 L432.50,344.16 L433.00,340.33 L433.50,336.41 L434.00,332.43 L434.50,328.38 L435.00,324.27 L435.50,320.11 L436.00,315.91 L436.50,311.67 L437.00,307.41 L437.50,303.12 L438.00,298.81 L438.50,294.50 L439.00,290.19 L439.50,285.88 L440.00,281.59 L440.50,277.33 L441.00,273.09 L441.50,268.89 L442.00,264.73 L442.50,260.62 L443.00,256.57 L443.50,252.59 L444.00,248.67 L444.50,244.84 L445.00,241.09 L445.50,237.43 L446.00,233.87 L446.50,230.41 L447.00,227.07 L447.50,223.83 L448.00,220.72 L448.50,217.73 L449.00,214.88 L449.50,212.16 L450.00,209.58 L450.50,207.15 L451.00,204.87 L451.50,202.74 L452.00,200.76 L452.50,198.95 L453.00,197.30 L453.50,195.81 L454.00,194.50 L454.50,193.35 L455.00,192.38 L455.50,191.58 L456.00,190.96 L456.50,190.52 L457.00,190.25 L457.50,190.16 L458.00,190.25 L458.50,190.52 L459.00,190.96 L459.50,191.58 L460.00,192.38 L460.50,193.35 L461.00,194.50 L461.50,195.81 L462.00,197.30 L462.50,198.95 L463.00,200.76 L463.50,202.74 L464.00,204.87 L464.50,207.15 L465.00,209.58 L465.50,212.16 L466.00,214.88 L466.50,217.73 L467.00,220.72 L467.50,223.83 L468.00,227.07 L468.50,230.41 L469.00,233.87 L469.50,237.43 L470.00,241.09 L470.50,244.84 L471.00,248.67 L471.50,252.59 L472.00,256.57 L472.50,260.62 L473.00,264.73 L473.50,268.89 L474.00,273.09 L474.50,277.33 L475.00,281.59 L475.50,285.88 L476.00,290.19 L476.50,294.50 L477.00,298.81 L477.50,303.12 L478.00,307.41 L478.50,311.67 L479.00,315.91 L479.50,320.11 L480.00,324.27 L480.50,328.38 L481.00,332.43 L481.50,336.41 L482.00,340.33 L482.50,344.16 L483.00,347.91 L483.50,351.57 L484.00,355.13 L484.50,358.59 L485.00,361.93 L485.50,365.17 L486.00,368.28 L486.50,371.27 L487.00,374.12 L487.50,376.84 L488.00,379.42 L488.50,381.85 L489.00,384.13 L489.50,386.26 L490.00,388.24 L490.50,390.05 L491.00,391.70 L491.50,393.19 L492.00,394.50 L492.50,395.65 L493.00,396.62 L493.50,397.42 L494.00,398.04 L494.50,398.48 L495.00,398.75 L495.50,398.84 L496.00,398.75 L496.50,398.48 L497.00,398.04 L497.50,397.42 L498.00,396.62 L498.50,395.65 L499.00,394.50 L499.50,393.19 L500.00,391.70 L500.50,390.05 L501.00,388.24 L501.50,386.26 L502.00,384.13 L502.50,381.85 L503.00,379.42 L503.50,376.84 L504.00,374.12 L504.50,371.27 L505.00,368.28 L505.50,365.17 L506.00,361.93 L506.50,358.59 L507.00,355.13 L507.50,351.57 L508.00,347.91 L508.50,344.16 L509.00,340.33 L509.50,336.41 L510.00,332.43 L510.50,328.38 L511.00,324.27 L511.50,320.11 L512.00,315.91 L512.50,311.67 L513.00,307.41 L513.50,303.12 L514.00,298.81 L514.50,294.50 L515.00,290.19 L515.50,285.88 L516.00,281.59 L516.50,277.33 L517.00,273.09 L517.50,268.89 L518.00,264.73 L518.50,260.62 L519.00,256.57 L519.50,252.59 L520.00,248.67 L520.50,244.84 L521.00,241.09 L521.50,237.43 L522.00,233.87 L522.50,230.41 L523.00,227.07 L523.50,223.83 L524.00,220.72 L524.50,217.73 L525.00,214.88 L525.50,212.16 L526.00,209.58 L526.50,207.15 L527.00,204.87 L527.50,202.74 L528.00,200.76 L528.50,198.95 L529.00,197.30 L529.50,195.81 L530.00,194.50 L530.50,193.35 L531.00,192.38 L531.50,191.58 L532.00,190.96 L532.50,190.52 L533.00,190.25 L533.50,190.16 L534.00,190.25 L534.50,190.52 L535.00,190.96 L535.50,191.58 L536.00,192.38 L536.50,193.35 L537.00,194.50 L537.50,195.81 L538.00,197.30 L538.50,198.95 L539.00,200.76 L539.50,202.74 L540.00,204.87 L540.50,207.15 L541.00,209.58 L541.50,212.16 L542.00,214.88 L542.50,217.73 L543.00,220.72 L543.50,223.83 L544.00,227.07 L544.50,230.41 L545.00,233.87 L545.50,237.43 L546.00,241.09 L546.50,244.84 L547.00,248.67 L547.50,252.59 L548.00,256.57 L548.50,260.62 L549.00,264.73 L549.50,268.89 L550.00,273.09 L550.50,277.33 L551.00,281.59 L551.50,285.88 L552.00,290.19 L552.50,294.50 L553.00,298.81 L553.50,303.12 L554.00,307.41 L554.50,311.67 L555.00,315.91 L555.50,320.11 L556.00,324.27 L556.50,328.38 L557.00,332.43 L557.50,336.41 L558.00,340.33 L558.50,344.16 L559.00,347.91 L559.50,351.57 L560.00,355.13 L560.50,358.59 L561.00,361.93 L561.50,365.17 L562.00,368.28 L562.50,371.27 L563.00,374.12 L563.50,376.84 L564.00,379.42 L564.50,381.85 L565.00,384.13 L565.50,386.26 L566.00,388.24 L566.50,390.05 L567.00,391.70 L567.50,393.19 L568.00,394.50 L568.50,395.65 L569.00,396.62 L569.50,397.42 L570.00,398.04 L570.50,398.48 L571.00,398.75 L571.50,398.84 L572.00,398.75 L572.50,398.48 L573.00,398.04 L573.50,397.42 L574.00,396.62 L574.50,395.65 L575.00,394.50 L575.50,393.19 L576.00,391.70 L576.50,390.05 L577.00,388.24 L577.50,386.26 L578.00,384.13 L578.50,381.85 L579.00,379.42 L579.50,376.84 L580.00,374.12 L580.50,371.27 L581.00,368.28 L581.50,365.17 L582.00,361.93 L582.50,358.59 L583.00,355.13 L583.50,351.57 L584.00,347.91 L584.50,344.16 L585.00,340.33 L585.50,336.41 L586.00,332.43 L586.50,328.38 L587.00,324.27 L587.50,320.11 L588.00,315.91 L588.50,311.67 L589.00,307.41 L589.50,303.12 L590.00,298.81 L590.50,294.50 L591.00,290.19 L591.50,285.88 L592.00,281.59 L592.50,277.33 L593.00,273.09 L593.50,268.89 L594.00,264.73 L594.50,260.62 L595.00,256.57 L595.50,252.59 L596.00,248.67 L596.50,244.84 L597.00,241.09 L597.50,237.43 L598.00,233.87 L598.50,230.41 L599.00,227.07 L599.50,223.83 L600.00,220.72 L600.50,217.73 L601.00,214.88 L601.50,212.16 L602.00,209.58 L602.50,207.15 L603.00,204.87 L603.50,202.74 L604.00,200.76 L604.50,198.95 L605.00,197.30 L605.50,195.81 L606.00,194.50 L606.50,193.35 L607.00,192.38 L607.50,191.58 L608.00,190.96 L608.50,190.52 L609.00,190.25 L609.50,190.16 L610.00,190.25 L610.50,190.52 L611.00,190.96 L611.50,191.58 L612.00,192.38 L612.50,193.35 L613.00,194.50 L613.50,195.81 L614.00,197.30 L614.50,198.95 L615.00,200.76 L615.50,202.74 L616.00,204.87 L616.50,207.15 L617.00,209.58 L617.50,212.16 L618.00,214.88 L618.50,217.73 L619.00,220.72 L619.50,223.83 L620.00,227.07 L620.50,230.41 L621.00,233.87 L621.50,237.43 L622.00,241.09 L622.50,244.84 L623.00,248.67 L623.50,252.59 L624.00,256.57 L624.50,260.62 L625.00,264.73 L625.50,268.89 L626.00,273.09 L626.50,277.33 L627.00,281.59 L627.50,285.88 L628.00,290.19 L628.50,294.50 L629.00,298.81 L629.50,303.12 L630.00,307.41 L630.50,311.67 L631.00,315.91 L631.50,320.11 L632.00,324.27 L632.50,328.38 L633.00,332.43 L633.50,336.41 L634.00,340.33 L634.50,344.16 L635.00,347.91 L635.50,351.57 L636.00,355.13 L636.50,358.59 L637.00,361.93 L637.50,365.17 L638.00,368.28 L638.50,371.27 L639.00,374.12 L639.50,376.84 L640.00,379.42 L640.50,381.85 L641.00,384.13 L641.50,386.26 L642.00,388.24 L642.50,390.05 L643.00,391.70 L643.50,393.19 L644.00,394.50 L644.50,395.65 L645.00,396.62 L645.50,397.42 L646.00,398.04 L646.50,398.48 L647.00,398.75 L647.50,398.84 L648.00,398.75 L648.50,398.48 L649.00,398.04 L649.50,397.42 L650.00,396.62 L650.50,395.65 L651.00,394.50 L651.50,393.19 L652.00,391.70 L652.50,390.05 L653.00,388.24 L653.50,386.26 L654.00,384.13 L654.50,381.85 L655.00,379.42 L655.50,376.84 L656.00,374.12 L656.50,371.27 L657.00,368.28 L657.50,365.17 L658.00,361.93 L658.50,358.59 L659.00,355.13 L659.50,351.57 L660.00,347.91 L660.50,344.16 L661.00,340.33 L661.50,336.41 L662.00,332.43 L662.50,328.38 L663.00,324.27 L663.50,320.11 L664.00,315.91 L664.50,311.67 L665.00,307.41 L665.50,303.12 L666.00,298.81 L666.50,294.50 L667.00,290.19 L667.50,285.88 L668.00,281.59 L668.50,277.33 L669.00,273.09 L669.50,268.89 L670.00,264.73 L670.50,260.62 L671.00,256.57 L671.50,252.59 L672.00,248.67 L672.50,244.84 L673.00,241.09 L673.50,237.43 L674.00,233.87 L674.50,230.41 L675.00,227.07 L675.50,223.83 L676.00,220.72 L676.50,217.73 L677.00,214.88 L677.50,212.16 L678.00,209.58 L678.50,207.15 L679.00,204.87 L679.50,202.74 L680.00,200.76 L680.50,198.95 L681.00,197.30 L681.50,195.81 L682.00,194.50 L682.50,193.35 L683.00,192.38 L683.50,191.58 L684.00,190.96 L684.50,190.52 L685.00,190.25 L685.50,190.16 L686.00,190.25 L686.50,190.52 L687.00,190.96 L687.50,191.58 L688.00,192.38 L688.50,193.35 L689.00,194.50 L689.50,195.81 L690.00,197.30 L690.50,198.95 L691.00,200.76 L691.50,202.74 L692.00,204.87 L692.50,207.15 L693.00,209.58 L693.50,212.16 L694.00,214.88 L694.50,217.73 L695.00,220.72 L695.50,223.83 L696.00,227.07 L696.50,230.41 L697.00,233.87 L697.50,237.43 L698.00,241.09 L698.50,244.84 L699.00,248.67 L699.50,252.59 L700.00,256.57 L700.50,260.62 L701.00,264.73 L701.50,268.89 L702.00,273.09 L702.50,277.33 L703.00,281.59 L703.50,285.88 L704.00,290.19 L704.50,294.50 L705.00,298.81 L705.50,303.12 L706.00,307.41 L706.50,311.67 L707.00,315.91 L707.50,320.11 L708.00,324.27 L708.50,328.38 L709.00,332.43 L709.50,336.41 L710.00,340.33 L710.50,344.16 L711.00,347.91 L711.50,351.57 L712.00,355.13 L712.50,358.59 L713.00,361.93 L713.50,365.17 L714.00,368.28 L714.50,371.27 L715.00,374.12 L715.50,376.84 L716.00,379.42 L716.50,381.85 L717.00,384.13 L717.50,386.26 L718.00,388.24 L718.50,390.05 L719.00,391.70 L719.50,393.19 L720.00,394.50 L720.50,395.65 L721.00,396.62 L721.50,397.42 L722.00,398.04 L722.50,398.48 L723.00,398.75 L723.50,398.84 L724.00,398.75 L724.50,398.48 L725.00,398.04 L725.50,397.42 L726.00,396.62 L726.50,395.65 L727.00,394.50 L727.50,393.19 L728.00,391.70 L728.50,390.05 L729.00,388.24 L729.50,386.26 L730.00,384.13 L730.50,381.85 L731.00,379.42 L731.50,376.84 L732.00,374.12 L732.50,371.27 L733.00,368.28 L733.50,365.17 L734.00,361.93 L734.50,358.59 L735.00,355.13 L735.50,351.57 L736.00,347.91 L736.50,344.16 L737.00,340.33 L737.50,336.41 L738.00,332.43 L738.50,328.38 L739.00,324.27 L739.50,320.11 L740.00,315.91 L740.50,311.67 L741.00,307.41 L741.50,303.12 L742.00,298.81 L742.50,294.50 L743.00,290.19 L743.50,285.88 L744.00,281.59 L744.50,277.33 L745.00,273.09 L745.50,268.89 L746.00,264.73 L746.50,260.62 L747.00,256.57 L747.50,252.59 L748.00,248.67 L748.50,244.84 L749.00,241.09 L749.50,237.43 L750.00,233.87 L750.50,230.41 L751.00,227.07 L751.50,223.83 L752.00,220.72 L752.50,217.73 L753.00,214.88 L753.50,212.16 L754.00,209.58 L754.50,207.15 L755.00,204.87 L755.50,202.74 L756.00,200.76 L756.50,198.95 L757.00,197.30 L757.50,195.81 L758.00,194.50 L758.50,193.35 L759.00,192.38 L759.50,191.58 L760.00,190.96 L760.50,190.52 L761.00,190.25 L761.50,190.16 L762.00,190.25 L762.50,190.52 L763.00,190.96 L763.50,191.58 L764.00,192.38 L764.50,193.35 L765.00,194.50 L765.50,195.81 L766.00,197.30 L766.50,198.95 L767.00,200.76 L767.50,202.74 L768.00,204.87 L768.50,207.15 L769.00,209.58 L769.50,212.16 L770.00,214.88 L770.50,217.73 L771.00,220.72 L771.50,223.83 L772.00,227.07 L772.50,230.41 L773.00,233.87 L773.50,237.43 L774.00,241.09 L774.50,244.84 L775.00,248.67 L775.50,252.59 L776.00,256.57 L776.50,260.62 L777.00,264.73 L777.50,268.89 L778.00,273.09 L778.50,277.33 L779.00,281.59 L779.50,285.88 L780.00,290.19 L780.50,294.50 L781.00,298.81 L781.50,303.12 L782.00,307.41 L782.50,311.67 L783.00,315.91 L783.50,320.11 L784.00,324.27 L784.50,328.38 L785.00,332.43 L785.50,336.41 L786.00,340.33 L786.50,344.16 L787.00,347.91 L787.50,351.57 L788.00,355.13 L788.50,358.59 L789.00,361.93 L789.50,365.17 L790.00,368.28 L790.50,371.27 L791.00,374.12 L791.50,376.84 L792.00,379.42 L792.50,381.85 L793.00,384.13 L793.50,386.26 L794.00,388.24 L794.50,390.05 L795.00,391.70 L795.50,393.19 L796.00,394.50 L796.50,395.65 L797.00,396.62 L797.50,397.42 L798.00,398.04 L798.50,398.48 L799.00,398.75 L799.50,398.84 L800.00,398.75 L800.50,398.48 L801.00,398.04 L801.50,397.42 L802.00,396.62 L802.50,395.65 L803.00,394.50 L803.50,393.19 L804.00,391.70 L804.50,390.05 L805.00,388.24 L805.50,386.26 L806.00,384.13 L806.50,381.85 L807.00,379.42 L807.50,376.84 L808.00,374.12 L808.50,371.27 L809.00,368.28 L809.50,365.17 L810.00,361.93 L810.50,358.59 L811.00,355.13 L811.50,351.57 L812.00,347.91 L812.50,344.16 L813.00,340.33 L813.50,336.41 L814.00,332.43 L814.50,328.38 L815.00,324.27 L815.50,320.11 L816.00,315.91 L816.50,311.67 L817.00,307.41 L817.50,303.12 L818.00,298.81 L818.50,294.50 L819.00,290.19 L819.50,285.88 L820.00,281.59 L820.50,277.33 L821.00,273.09 L821.50,268.89 L822.00,264.73 L822.50,260.62 L823.00,256.57 L823.50,252.59 L824.00,248.67 L824.50,244.84 L825.00,241.09 L825.50,237.43 L826.00,233.87 L826.50,230.41 L827.00,227.07 L827.50,223.83 L828.00,220.72 L828.50,217.73 L829.00,214.88 L829.50,212.16 L830.00,209.58 L830.50,207.15 L831.00,204.87 L831.50,202.74 L832.00,200.76 L832.50,198.95 L833.00,197.30 L833.50,195.81 L834.00,194.50 L834.50,193.35 L835.00,192.38 L835.50,191.58 L836.00,190.96 L836.50,190.52 L837.00,190.25 L837.50,190.16 L838.00,190.25 L838.50,190.52 L839.00,190.96 L839.50,191.58 L840.00,192.38 L840.50,193.35 L841.00,194.50 L841.50,195.81 L842.00,197.30 L842.50,198.95 L843.00,200.76 L843.50,202.74 L844.00,204.87 L844.50,207.15 L845.00,209.58 L845.50,212.16 L846.00,214.88 L846.50,217.73 L847.00,220.72 L847.50,223.83 L848.00,227.07 L848.50,230.41 L849.00,233.87 L849.50,237.43 L850.00,241.09 L850.50,244.84 L851.00,248.67 L851.50,252.59 L852.00,256.57 L852.50,260.62 L853.00,264.73 L853.50,268.89 L854.00,273.09 L854.50,277.33 L855.00,281.59 L855.50,285.88 L856.00,290.19 L856.50,294.50 L857.00,298.81 L857.50,303.12 L858.00,307.41 L858.50,311.67 L859.00,315.91 L859.50,320.11 L860.00,324.27 L860.50,328.38 L861.00,332.43 L861.50,336.41 L862.00,340.33 L862.50,344.16 L863.00,347.91 L863.50,351.57 L864.00,355.13 L864.50,358.59 L865.00,361.93 L865.50,365.17 L866.00,368.28 L866.50,371.27 L867.00,374.12 L867.50,376.84 L868.00,379.42 L868.50,381.85 L869.00,384.13 L869.50,386.26 L870.00,388.24 L870.50,390.05 L871.00,391.70 L871.50,393.19 L872.00,394.50 L872.50,395.65 L873.00,396.62 L873.50,397.42 L874.00,398.04 L874.50,398.48 L875.00,398.75 L875.50,398.84 L876.00,398.75 L876.50,398.48 L877.00,398.04 L877.50,397.42 L878.00,396.62 L878.50,395.65 L879.00,394.50 L879.50,393.19 L880.00,391.70 L880.50,390.05 L881.00,388.24 L881.50,386.26 L882.00,384.13 L882.50,381.85 L883.00,379.42 L883.50,376.84 L884.00,374.12 L884.50,371.27 L885.00,368.28 L885.50,365.17 L886.00,361.93 L886.50,358.59 L887.00,355.13 L887.50,351.57 L888.00,347.91 L888.50,344.16 L889.00,340.33 L889.50,336.41 L890.00,332.43 L890.50,328.38 L891.00,324.27 L891.50,320.11 L892.00,315.91 L892.50,311.67 L893.00,307.41 L893.50,303.12 L894.00,298.81 L894.50,294.50" fill="none" stroke="#B0F0B4" stroke-width="1.1" shape-rendering="crispEdges"/>
<path d="M134.50,294.50 L135.00,293.04 L135.50,291.59 L136.00,290.14 L136.50,288.70 L137.00,287.27 L137.50,285.85 L138.00,284.44 L138.50,283.05 L139.00,281.69 L139.50,280.34 L140.00,279.02 L140.50,277.72 L141.00,276.46 L141.50,275.22 L142.00,274.02 L142.50,272.85 L143.00,271.72 L143.50,270.63 L144.00,269.57 L144.50,268.57 L145.00,267.60 L145.50,266.68 L146.00,265.81 L146.50,264.99 L147.00,264.22 L147.50,263.50 L148.00,262.83 L148.50,262.22 L149.00,261.66 L149.50,261.16 L150.00,260.72 L150.50,260.33 L151.00,260.00 L151.50,259.73 L152.00,259.52 L152.50,259.37 L153.00,259.28 L153.50,259.25 L154.00,259.28 L154.50,259.37 L155.00,259.52 L155.50,259.73 L156.00,260.00 L156.50,260.33 L157.00,260.72 L157.50,261.16 L158.00,261.66 L158.50,262.22 L159.00,262.83 L159.50,263.50 L160.00,264.22 L160.50,264.99 L161.00,265.81 L161.50,266.68 L162.00,267.60 L162.50,268.57 L163.00,269.57 L163.50,270.63 L164.00,271.72 L164.50,272.85 L165.00,274.02 L165.50,275.22 L166.00,276.46 L166.50,277.72 L167.00,279.02 L167.50,280.34 L168.00,281.69 L168.50,283.05 L169.00,284.44 L169.50,285.85 L170.00,287.27 L170.50,288.70 L171.00,290.14 L171.50,291.59 L172.00,293.04 L172.50,294.50 L173.00,295.96 L173.50,297.41 L174.00,298.86 L174.50,300.30 L175.00,301.73 L175.50,303.15 L176.00,304.56 L176.50,305.95 L177.00,307.31 L177.50,308.66 L178.00,309.98 L178.50,311.28 L179.00,312.54 L179.50,313.78 L180.00,314.98 L180.50,316.15 L181.00,317.28 L181.50,318.37 L182.00,319.43 L182.50,320.43 L183.00,321.40 L183.50,322.32 L184.00,323.19 L184.50,324.01 L185.00,324.78 L185.50,325.50 L186.00,326.17 L186.50,326.78 L187.00,327.34 L187.50,327.84 L188.00,328.28 L188.50,328.67 L189.00,329.00 L189.50,329.27 L190.00,329.48 L190.50,329.63 L191.00,329.72 L191.50,329.75 L192.00,329.72 L192.50,329.63 L193.00,329.48 L193.50,329.27 L194.00,329.00 L194.50,328.67 L195.00,328.28 L195.50,327.84 L196.00,327.34 L196.50,326.78 L197.00,326.17 L197.50,325.50 L198.00,324.78 L198.50,324.01 L199.00,323.19 L199.50,322.32 L200.00,321.40 L200.50,320.43 L201.00,319.43 L201.50,318.37 L202.00,317.28 L202.50,316.15 L203.00,314.98 L203.50,313.78 L204.00,312.54 L204.50,311.28 L205.00,309.98 L205.50,308.66 L206.00,307.31 L206.50,305.95 L207.00,304.56 L207.50,303.15 L208.00,301.73 L208.50,300.30 L209.00,298.86 L209.50,297.41 L210.00,295.96 L210.50,294.50 L211.00,293.04 L211.50,291.59 L212.00,290.14 L212.50,288.70 L213.00,287.27 L213.50,285.85 L214.00,284.44 L214.50,283.05 L215.00,281.69 L215.50,280.34 L216.00,279.02 L216.50,277.72 L217.00,276.46 L217.50,275.22 L218.00,274.02 L218.50,272.85 L219.00,271.72 L219.50,270.63 L220.00,269.57 L220.50,268.57 L221.00,267.60 L221.50,266.68 L222.00,265.81 L222.50,264.99 L223.00,264.22 L223.50,263.50 L224.00,262.83 L224.50,262.22 L225.00,261.66 L225.50,261.16 L226.00,260.72 L226.50,260.33 L227.00,260.00 L227.50,259.73 L228.00,259.52 L228.50,259.37 L229.00,259.28 L229.50,259.25 L230.00,259.28 L230.50,259.37 L231.00,259.52 L231.50,259.73 L232.00,260.00 L232.50,260.33 L233.00,260.72 L233.50,261.16 L234.00,261.66 L234.50,262.22 L235.00,262.83 L235.50,263.50 L236.00,264.22 L236.50,264.99 L237.00,265.81 L237.50,266.68 L238.00,267.60 L238.50,268.57 L239.00,269.57 L239.50,270.63 L240.00,271.72 L240.50,272.85 L241.00,274.02 L241.50,275.22 L242.00,276.46 L242.50,277.72 L243.00,279.02 L243.50,280.34 L244.00,281.69 L244.50,283.05 L245.00,284.44 L245.50,285.85 L246.00,287.27 L246.50,288.70 L247.00,290.14 L247.50,291.59 L248.00,293.04 L248.50,294.50 L249.00,295.96 L249.50,297.41 L250.00,298.86 L250.50,300.30 L251.00,301.73 L251.50,303.15 L252.00,304.56 L252.50,305.95 L253.00,307.31 L253.50,308.66 L254.00,309.98 L254.50,311.28 L255.00,312.54 L255.50,313.78 L256.00,314.98 L256.50,316.15 L257.00,317.28 L257.50,318.37 L258.00,319.43 L258.50,320.43 L259.00,321.40 L259.50,322.32 L260.00,323.19 L260.50,324.01 L261.00,324.78 L261.50,325.50 L262.00,326.17 L262.50,326.78 L263.00,327.34 L263.50,327.84 L264.00,328.28 L264.50,328.67 L265.00,329.00 L265.50,329.27 L266.00,329.48 L266.50,329.63 L267.00,329.72 L267.50,329.75 L268.00,329.72 L268.50,329.63 L269.00,329.48 L269.50,329.27 L270.00,329.00 L270.50,328.67 L271.00,328.28 L271.50,327.84 L272.00,327.34 L272.50,326.78 L273.00,326.17 L273.50,325.50 L274.00,324.78 L274.50,324.01 L275.00,323.19 L275.50,322.32 L276.00,321.40 L276.50,320.43 L277.00,319.43 L277.50,318.37 L278.00,317.28 L278.50,316.15 L279.00,314.98 L279.50,313.78 L280.00,312.54 L280.50,311.28 L281.00,309.98 L281.50,308.66 L282.00,307.31 L282.50,305.95 L283.00,304.56 L283.50,303.15 L284.00,301.73 L284.50,300.30 L285.00,298.86 L285.50,297.41 L286.00,295.96 L286.50,294.50 L287.00,293.04 L287.50,291.59 L288.00,290.14 L288.50,288.70 L289.00,287.27 L289.50,285.85 L290.00,284.44 L290.50,283.05 L291.00,281.69 L291.50,280.34 L292.00,279.02 L292.50,277.72 L293.00,276.46 L293.50,275.22 L294.00,274.02 L294.50,272.85 L295.00,271.72 L295.50,270.63 L296.00,269.57 L296.50,268.57 L297.00,267.60 L297.50,266.68 L298.00,265.81 L298.50,264.99 L299.00,264.22 L299.50,263.50 L300.00,262.83 L300.50,262.22 L301.00,261.66 L301.50,261.16 L302.00,260.72 L302.50,260.33 L303.00,260.00 L303.50,259.73 L304.00,259.52 L304.50,259.37 L305.00,259.28 L305.50,259.25 L306.00,259.28 L306.50,259.37 L307.00,259.52 L307.50,259.73 L308.00,260.00 L308.50,260.33 L309.00,260.72 L309.50,261.16 L310.00,261.66 L310.50,262.22 L311.00,262.83 L311.50,263.50 L312.00,264.22 L312.50,264.99 L313.00,265.81 L313.50,266.68 L314.00,267.60 L314.50,268.57 L315.00,269.57 L315.50,270.63 L316.00,271.72 L316.50,272.85 L317.00,274.02 L317.50,275.22 L318.00,276.46 L318.50,277.72 L319.00,279.02 L319.50,280.34 L320.00,281.69 L320.50,283.05 L321.00,284.44 L321.50,285.85 L322.00,287.27 L322.50,288.70 L323.00,290.14 L323.50,291.59 L324.00,293.04 L324.50,294.50 L325.00,295.96 L325.50,297.41 L326.00,298.86 L326.50,300.30 L327.00,301.73 L327.50,303.15 L328.00,304.56 L328.50,305.95 L329.00,307.31 L329.50,308.66 L330.00,309.98 L330.50,311.28 L331.00,312.54 L331.50,313.78 L332.00,314.98 L332.50,316.15 L333.00,317.28 L333.50,318.37 L334.00,319.43 L334.50,320.43 L335.00,321.40 L335.50,322.32 L336.00,323.19 L336.50,324.01 L337.00,324.78 L337.50,325.50 L338.00,326.17 L338.50,326.78 L339.00,327.34 L339.50,327.84 L340.00,328.28 L340.50,328.67 L341.00,329.00 L341.50,329.27 L342.00,329.48 L342.50,329.63 L343.00,329.72 L343.50,329.75 L344.00,329.72 L344.50,329.63 L345.00,329.48 L345.50,329.27 L346.00,329.00 L346.50,328.67 L347.00,328.28 L347.50,327.84 L348.00,327.34 L348.50,326.78 L349.00,326.17 L349.50,325.50 L350.00,324.78 L350.50,324.01 L351.00,323.19 L351.50,322.32 L352.00,321.40 L352.50,320.43 L353.00,319.43 L353.50,318.37 L354.00,317.28 L354.50,316.15 L355.00,314.98 L355.50,313.78 L356.00,312.54 L356.50,311.28 L357.00,309.98 L357.50,308.66 L358.00,307.31 L358.50,305.95 L359.00,304.56 L359.50,303.15 L360.00,301.73 L360.50,300.30 L361.00,298.86 L361.50,297.41 L362.00,295.96 L362.50,294.50 L363.00,293.04 L363.50,291.59 L364.00,290.14 L364.50,288.70 L365.00,287.27 L365.50,285.85 L366.00,284.44 L366.50,283.05 L367.00,281.69 L367.50,280.34 L368.00,279.02 L368.50,277.72 L369.00,276.46 L369.50,275.22 L370.00,274.02 L370.50,272.85 L371.00,271.72 L371.50,270.63 L372.00,269.57 L372.50,268.57 L373.00,267.60 L373.50,266.68 L374.00,265.81 L374.50,264.99 L375.00,264.22 L375.50,263.50 L376.00,262.83 L376.50,262.22 L377.00,261.66 L377.50,261.16 L378.00,260.72 L378.50,260.33 L379.00,260.00 L379.50,259.73 L380.00,259.52 L380.50,259.37 L381.00,259.28 L381.50,259.25 L382.00,259.28 L382.50,259.37 L383.00,259.52 L383.50,259.73 L384.00,260.00 L384.50,260.33 L385.00,260.72 L385.50,261.16 L386.00,261.66 L386.50,262.22 L387.00,262.83 L387.50,263.50 L388.00,264.22 L388.50,264.99 L389.00,265.81 L389.50,266.68 L390.00,267.60 L390.50,268.57 L391.00,269.57 L391.50,270.63 L392.00,271.72 L392.50,272.85 L393.00,274.02 L393.50,275.22 L394.00,276.46 L394.50,277.72 L395.00,279.02 L395.50,280.34 L396.00,281.69 L396.50,283.05 L397.00,284.44 L397.50,285.85 L398.00,287.27 L398.50,288.70 L399.00,290.14 L399.50,291.59 L400.00,293.04 L400.50,294.50 L401.00,295.96 L401.50,297.41 L402.00,298.86 L402.50,300.30 L403.00,301.73 L403.50,303.15 L404.00,304.56 L404.50,305.95 L405.00,307.31 L405.50,308.66 L406.00,309.98 L406.50,311.28 L407.00,312.54 L407.50,313.78 L408.00,314.98 L408.50,316.15 L409.00,317.28 L409.50,318.37 L410.00,319.43 L410.50,320.43 L411.00,321.40 L411.50,322.32 L412.00,323.19 L412.50,324.01 L413.00,324.78 L413.50,325.50 L414.00,326.17 L414.50,326.78 L415.00,327.34 L415.50,327.84 L416.00,328.28 L416.50,328.67 L417.00,329.00 L417.50,329.27 L418.00,329.48 L418.50,329.63 L419.00,329.72 L419.50,329.75 L420.00,329.72 L420.50,329.63 L421.00,329.48 L421.50,329.27 L422.00,329.00 L422.50,328.67 L423.00,328.28 L423.50,327.84 L424.00,327.34 L424.50,326.78 L425.00,326.17 L425.50,325.50 L426.00,324.78 L426.50,324.01 L427.00,323.19 L427.50,322.32 L428.00,321.40 L428.50,320.43 L429.00,319.43 L429.50,318.37 L430.00,317.28 L430.50,316.15 L431.00,314.98 L431.50,313.78 L432.00,312.54 L432.50,311.28 L433.00,309.98 L433.50,308.66 L434.00,307.31 L434.50,305.95 L435.00,304.56 L435.50,303.15 L436.00,301.73 L436.50,300.30 L437.00,298.86 L437.50,297.41 L438.00,295.96 L438.50,294.50 L439.00,293.04 L439.50,291.59 L440.00,290.14 L440.50,288.70 L441.00,287.27 L441.50,285.85 L442.00,284.44 L442.50,283.05 L443.00,281.69 L443.50,280.34 L444.00,279.02 L444.50,277.72 L445.00,276.46 L445.50,275.22 L446.00,274.02 L446.50,272.85 L447.00,271.72 L447.50,270.63 L448.00,269.57 L448.50,268.57 L449.00,267.60 L449.50,266.68 L450.00,265.81 L450.50,264.99 L451.00,264.22 L451.50,263.50 L452.00,262.83 L452.50,262.22 L453.00,261.66 L453.50,261.16 L454.00,260.72 L454.50,260.33 L455.00,260.00 L455.50,259.73 L456.00,259.52 L456.50,259.37 L457.00,259.28 L457.50,259.25 L458.00,259.28 L458.50,259.37 L459.00,259.52 L459.50,259.73 L460.00,260.00 L460.50,260.33 L461.00,260.72 L461.50,261.16 L462.00,261.66 L462.50,262.22 L463.00,262.83 L463.50,263.50 L464.00,264.22 L464.50,264.99 L465.00,265.81 L465.50,266.68 L466.00,267.60 L466.50,268.57 L467.00,269.57 L467.50,270.63 L468.00,271.72 L468.50,272.85 L469.00,274.02 L469.50,275.22 L470.00,276.46 L470.50,277.72 L471.00,279.02 L471.50,280.34 L472.00,281.69 L472.50,283.05 L473.00,284.44 L473.50,285.85 L474.00,287.27 L474.50,288.70 L475.00,290.14 L475.50,291.59 L476.00,293.04 L476.50,294.50 L477.00,295.96 L477.50,297.41 L478.00,298.86 L478.50,300.30 L479.00,301.73 L479.50,303.15 L480.00,304.56 L480.50,305.95 L481.00,307.31 L481.50,308.66 L482.00,309.98 L482.50,311.28 L483.00,312.54 L483.50,313.78 L484.00,314.98 L484.50,316.15 L485.00,317.28 L485.50,318.37 L486.00,319.43 L486.50,320.43 L487.00,321.40 L487.50,322.32 L488.00,323.19 L488.50,324.01 L489.00,324.78 L489.50,325.50 L490.00,326.17 L490.50,326.78 L491.00,327.34 L491.50,327.84 L492.00,328.28 L492.50,328.67 L493.00,329.00 L493.50,329.27 L494.00,329.48 L494.50,329.63 L495.00,329.72 L495.50,329.75 L496.00,329.72 L496.50,329.63 L497.00,329.48 L497.50,329.27 L498.00,329.00 L498.50,328.67 L499.00,328.28 L499.50,327.84 L500.00,327.34 L500.50,326.78 L501.00,326.17 L501.50,325.50 L502.00,324.78 L502.50,324.01 L503.00,323.19 L503.50,322.32 L504.00,321.40 L504.50,320.43 L505.00,319.43 L505.50,318.37 L506.00,317.28 L506.50,316.15 L507.00,314.98 L507.50,313.78 L508.00,312.54 L508.50,311.28 L509.00,309.98 L509.50,308.66 L510.00,307.31 L510.50,305.95 L511.00,304.56 L511.50,303.15 L512.00,301.73 L512.50,300.30 L513.00,298.86 L513.50,297.41 L514.00,295.96 L514.50,294.50 L515.00,293.04 L515.50,291.59 L516.00,290.14 L516.50,288.70 L517.00,287.27 L517.50,285.85 L518.00,284.44 L518.50,283.05 L519.00,281.69 L519.50,280.34 L520.00,279.02 L520.50,277.72 L521.00,276.46 L521.50,275.22 L522.00,274.02 L522.50,272.85 L523.00,271.72 L523.50,270.63 L524.00,269.57 L524.50,268.57 L525.00,267.60 L525.50,266.68 L526.00,265.81 L526.50,264.99 L527.00,264.22 L527.50,263.50 L528.00,262.83 L528.50,262.22 L529.00,261.66 L529.50,261.16 L530.00,260.72 L530.50,260.33 L531.00,260.00 L531.50,259.73 L532.00,259.52 L532.50,259.37 L533.00,259.28 L533.50,259.25 L534.00,259.28 L534.50,259.37 L535.00,259.52 L535.50,259.73 L536.00,260.00 L536.50,260.33 L537.00,260.72 L537.50,261.16 L538.00,261.66 L538.50,262.22 L539.00,262.83 L539.50,263.50 L540.00,264.22 L540.50,264.99 L541.00,265.81 L541.50,266.68 L542.00,267.60 L542.50,268.57 L543.00,269.57 L543.50,270.63 L544.00,271.72 L544.50,272.85 L545.00,274.02 L545.50,275.22 L546.00,276.46 L546.50,277.72 L547.00,279.02 L547.50,280.34 L548.00,281.69 L548.50,283.05 L549.00,284.44 L549.50,285.85 L550.00,287.27 L550.50,288.70 L551.00,290.14 L551.50,291.59 L552.00,293.04 L552.50,294.50 L553.00,295.96 L553.50,297.41 L554.00,298.86 L554.50,300.30 L555.00,301.73 L555.50,303.15 L556.00,304.56 L556.50,305.95 L557.00,307.31 L557.50,308.66 L558.00,309.98 L558.50,311.28 L559.00,312.54 L559.50,313.78 L560.00,314.98 L560.50,316.15 L561.00,317.28 L561.50,318.37 L562.00,319.43 L562.50,320.43 L563.00,321.40 L563.50,322.32 L564.00,323.19 L564.50,324.01 L565.00,324.78 L565.50,325.50 L566.00,326.17 L566.50,326.78 L567.00,327.34 L567.50,327.84 L568.00,328.28 L568.50,328.67 L569.00,329.00 L569.50,329.27 L570.00,329.48 L570.50,329.63 L571.00,329.72 L571.50,329.75 L572.00,329.72 L572.50,329.63 L573.00,329.48 L573.50,329.27 L574.00,329.00 L574.50,328.67 L575.00,328.28 L575.50,327.84 L576.00,327.34 L576.50,326.78 L577.00,326.17 L577.50,325.50 L578.00,324.78 L578.50,324.01 L579.00,323.19 L579.50,322.32 L580.00,321.40 L580.50,320.43 L581.00,319.43 L581.50,318.37 L582.00,317.28 L582.50,316.15 L583.00,314.98 L583.50,313.78 L584.00,312.54 L584.50,311.28 L585.00,309.98 L585.50,308.66 L586.00,307.31 L586.50,305.95 L587.00,304.56 L587.50,303.15 L588.00,301.73 L588.50,300.30 L589.00,298.86 L589.50,297.41 L590.00,295.96 L590.50,294.50 L591.00,293.04 L591.50,291.59 L592.00,290.14 L592.50,288.70 L593.00,287.27 L593.50,285.85 L594.00,284.44 L594.50,283.05 L595.00,281.69 L595.50,280.34 L596.00,279.02 L596.50,277.72 L597.00,276.46 L597.50,275.22 L598.00,274.02 L598.50,272.85 L599.00,271.72 L599.50,270.63 L600.00,269.57 L600.50,268.57 L601.00,267.60 L601.50,266.68 L602.00,265.81 L602.50,264.99 L603.00,264.22 L603.50,263.50 L604.00,262.83 L604.50,262.22 L605.00,261.66 L605.50,261.16 L606.00,260.72 L606.50,260.33 L607.00,260.00 L607.50,259.73 L608.00,259.52 L608.50,259.37 L609.00,259.28 L609.50,259.25 L610.00,259.28 L610.50,259.37 L611.00,259.52 L611.50,259.73 L612.00,260.00 L612.50,260.33 L613.00,260.72 L613.50,261.16 L614.00,261.66 L614.50,262.22 L615.00,262.83 L615.50,263.50 L616.00,264.22 L616.50,264.99 L617.00,265.81 L617.50,266.68 L618.00,267.60 L618.50,268.57 L619.00,269.57 L619.50,270.63 L620.00,271.72 L620.50,272.85 L621.00,274.02 L621.50,275.22 L622.00,276.46 L622.50,277.72 L623.00,279.02 L623.50,280.34 L624.00,281.69 L624.50,283.05 L625.00,284.44 L625.50,285.85 L626.00,287.27 L626.50,288.70 L627.00,290.14 L627.50,291.59 L628.00,293.04 L628.50,294.50 L629.00,295.96 L629.50,297.41 L630.00,298.86 L630.50,300.30 L631.00,301.73 L631.50,303.15 L632.00,304.56 L632.50,305.95 L633.00,307.31 L633.50,308.66 L634.00,309.98 L634.50,311.28 L635.00,312.54 L635.50,313.78 L636.00,314.98 L636.50,316.15 L637.00,317.28 L637.50,318.37 L638.00,319.43 L638.50,320.43 L639.00,321.40 L639.50,322.32 L640.00,323.19 L640.50,324.01 L641.00,324.78 L641.50,325.50 L642.00,326.17 L642.50,326.78 L643.00,327.34 L643.50,327.84 L644.00,328.28 L644.50,328.67 L645.00,329.00 L645.50,329.27 L646.00,329.48 L646.50,329.63 L647.00,329.72 L647.50,329.75 L648.00,329.72 L648.50,329.63 L649.00,329.48 L649.50,329.27 L650.00,329.00 L650.50,328.67 L651.00,328.28 L651.50,327.84 L652.00,327.34 L652.50,326.78 L653.00,326.17 L653.50,325.50 L654.00,324.78 L654.50,324.01 L655.00,323.19 L655.50,322.32 L656.00,321.40 L656.50,320.43 L657.00,319.43 L657.50,318.37 L658.00,317.28 L658.50,316.15 L659.00,314.98 L659.50,313.78 L660.00,312.54 L660.50,311.28 L661.00,309.98 L661.50,308.66 L662.00,307.31 L662.50,305.95 L663.00,304.56 L663.50,303.15 L664.00,301.73 L664.50,300.30 L665.00,298.86 L665.50,297.41 L666.00,295.96 L666.50,294.50 L667.00,293.04 L667.50,291.59 L668.00,290.14 L668.50,288.70 L669.00,287.27 L669.50,285.85 L670.00,284.44 L670.50,283.05 L671.00,281.69 L671.50,280.34 L672.00,279.02 L672.50,277.72 L673.00,276.46 L673.50,275.22 L674.00,274.02 L674.50,272.85 L675.00,271.72 L675.50,270.63 L676.00,269.57 L676.50,268.57 L677.00,267.60 L677.50,266.68 L678.00,265.81 L678.50,264.99 L679.00,264.22 L679.50,263.50 L680.00,262.83 L680.50,262.22 L681.00,261.66 L681.50,261.16 L682.00,260.72 L682.50,260.33 L683.00,260.00 L683.50,259.73 L684.00,259.52 L684.50,259.37 L685.00,259.28 L685.50,259.25 L686.00,259.28 L686.50,259.37 L687.00,259.52 L687.50,259.73 L688.00,260.00 L688.50,260.33 L689.00,260.72 L689.50,261.16 L690.00,261.66 L690.50,262.22 L691.00,262.83 L691.50,263.50 L692.00,264.22 L692.50,264.99 L693.00,265.81 L693.50,266.68 L694.00,267.60 L694.50,268.57 L695.00,269.57 L695.50,270.63 L696.00,271.72 L696.50,272.85 L697.00,274.02 L697.50,275.22 L698.00,276.46 L698.50,277.72 L699.00,279.02 L699.50,280.34 L700.00,281.69 L700.50,283.05 L701.00,284.44 L701.50,285.85 L702.00,287.27 L702.50,288.70 L703.00,290.14 L703.50,291.59 L704.00,293.04 L704.50,294.50 L705.00,295.96 L705.50,297.41 L706.00,298.86 L706.50,300.30 L707.00,301.73 L707.50,303.15 L708.00,304.56 L708.50,305.95 L709.00,307.31 L709.50,308.66 L710.00,309.98 L710.50,311.28 L711.00,312.54 L711.50,313.78 L712.00,314.98 L712.50,316.15 L713.00,317.28 L713.50,318.37 L714.00,319.43 L714.50,320.43 L715.00,321.40 L715.50,322.32 L716.00,323.19 L716.50,324.01 L717.00,324.78 L717.50,325.50 L718.00,326.17 L718.50,326.78 L719.00,327.34 L719.50,327.84 L720.00,328.28 L720.50,328.67 L721.00,329.00 L721.50,329.27 L722.00,329.48 L722.50,329.63 L723.00,329.72 L723.50,329.75 L724.00,329.72 L724.50,329.63 L725.00,329.48 L725.50,329.27 L726.00,329.00 L726.50,328.67 L727.00,328.28 L727.50,327.84 L728.00,327.34 L728.50,326.78 L729.00,326.17 L729.50,325.50 L730.00,324.78 L730.50,324.01 L731.00,323.19 L731.50,322.32 L732.00,321.40 L732.50,320.43 L733.00,319.43 L733.50,318.37 L734.00,317.28 L734.50,316.15 L735.00,314.98 L735.50,313.78 L736.00,312.54 L736.50,311.28 L737.00,309.98 L737.50,308.66 L738.00,307.31 L738.50,305.95 L739.00,304.56 L739.50,303.15 L740.00,301.73 L740.50,300.30 L741.00,298.86 L741.50,297.41 L742.00,295.96 L742.50,294.50 L743.00,293.04 L743.50,291.59 L744.00,290.14 L744.50,288.70 L745.00,287.27 L745.50,285.85 L746.00,284.44 L746.50,283.05 L747.00,281.69 L747.50,280.34 L748.00,279.02 L748.50,277.72 L749.00,276.46 L749.50,275.22 L750.00,274.02 L750.50,272.85 L751.00,271.72 L751.50,270.63 L752.00,269.57 L752.50,268.57 L753.00,267.60 L753.50,266.68 L754.00,265.81 L754.50,264.99 L755.00,264.22 L755.50,263.50 L756.00,262.83 L756.50,262.22 L757.00,261.66 L757.50,261.16 L758.00,260.72 L758.50,260.33 L759.00,260.00 L759.50,259.73 L760.00,259.52 L760.50,259.37 L761.00,259.28 L761.50,259.25 L762.00,259.28 L762.50,259.37 L763.00,259.52 L763.50,259.73 L764.00,260.00 L764.50,260.33 L765.00,260.72 L765.50,261.16 L766.00,261.66 L766.50,262.22 L767.00,262.83 L767.50,263.50 L768.00,264.22 L768.50,264.99 L769.00,265.81 L769.50,266.68 L770.00,267.60 L770.50,268.57 L771.00,269.57 L771.50,270.63 L772.00,271.72 L772.50,272.85 L773.00,274.02 L773.50,275.22 L774.00,276.46 L774.50,277.72 L775.00,279.02 L775.50,280.34 L776.00,281.69 L776.50,283.05 L777.00,284.44 L777.50,285.85 L778.00,287.27 L778.50,288.70 L779.00,290.14 L779.50,291.59 L780.00,293.04 L780.50,294.50 L781.00,295.96 L781.50,297.41 L782.00,298.86 L782.50,300.30 L783.00,301.73 L783.50,303.15 L784.00,304.56 L784.50,305.95 L785.00,307.31 L785.50,308.66 L786.00,309.98 L786.50,311.28 L787.00,312.54 L787.50,313.78 L788.00,314.98 L788.50,316.15 L789.00,317.28 L789.50,318.37 L790.00,319.43 L790.50,320.43 L791.00,321.40 L791.50,322.32 L792.00,323.19 L792.50,324.01 L793.00,324.78 L793.50,325.50 L794.00,326.17 L794.50,326.78 L795.00,327.34 L795.50,327.84 L796.00,328.28 L796.50,328.67 L797.00,329.00 L797.50,329.27 L798.00,329.48 L798.50,329.63 L799.00,329.72 L799.50,329.75 L800.00,329.72 L800.50,329.63 L801.00,329.48 L801.50,329.27 L802.00,329.00 L802.50,328.67 L803.00,328.28 L803.50,327.84 L804.00,327.34 L804.50,326.78 L805.00,326.17 L805.50,325.50 L806.00,324.78 L806.50,324.01 L807.00,323.19 L807.50,322.32 L808.00,321.40 L808.50,320.43 L809.00,319.43 L809.50,318.37 L810.00,317.28 L810.50,316.15 L811.00,314.98 L811.50,313.78 L812.00,312.54 L812.50,311.28 L813.00,309.98 L813.50,308.66 L814.00,307.31 L814.50,305.95 L815.00,304.56 L815.50,303.15 L816.00,301.73 L816.50,300.30 L817.00,298.86 L817.50,297.41 L818.00,295.96 L818.50,294.50 L819.00,293.04 L819.50,291.59 L820.00,290.14 L820.50,288.70 L821.00,287.27 L821.50,285.85 L822.00,284.44 L822.50,283.05 L823.00,281.69 L823.50,280.34 L824.00,279.02 L824.50,277.72 L825.00,276.46 L825.50,275.22 L826.00,274.02 L826.50,272.85 L827.00,271.72 L827.50,270.63 L828.00,269.57 L828.50,268.57 L829.00,267.60 L829.50,266.68 L830.00,265.81 L830.50,264.99 L831.00,264.22 L831.50,263.50 L832.00,262.83 L832.50,262.22 L833.00,261.66 L833.50,261.16 L834.00,260.72 L834.50,260.33 L835.00,260.00 L835.50,259.73 L836.00,259.52 L836.50,259.37 L837.00,259.28 L837.50,259.25 L838.00,259.28 L838.50,259.37 L839.00,259.52 L839.50,259.73 L840.00,260.00 L840.50,260.33 L841.00,260.72 L841.50,261.16 L842.00,261.66 L842.50,262.22 L843.00,262.83 L843.50,263.50 L844.00,264.22 L844.50,264.99 L845.00,265.81 L845.50,266.68 L846.00,267.60 L846.50,268.57 L847.00,269.57 L847.50,270.63 L848.00,271.72 L848.50,272.85 L849.00,274.02 L849.50,275.22 L850.00,276.46 L850.50,277.72 L851.00,279.02 L851.50,280.34 L852.00,281.69 L852.50,283.05 L853.00,284.44 L853.50,285.85 L854.00,287.27 L854.50,288.70 L855.00,290.14 L855.50,291.59 L856.00,293.04 L856.50,294.50 L857.00,295.96 L857.50,297.41 L858.00,298.86 L858.50,300.30 L859.00,301.73 L859.50,303.15 L860.00,304.56 L860.50,305.95 L861.00,307.31 L861.50,308.66 L862.00,309.98 L862.50,311.28 L863.00,312.54 L863.50,313.78 L864.00,314.98 L864.50,316.15 L865.00,317.28 L865.50,318.37 L866.00,319.43 L866.50,320.43 L867.00,321.40 L867.50,322.32 L868.00,323.19 L868.50,324.01 L869.00,324.78 L869.50,325.50 L870.00,326.17 L870.50,326.78 L871.00,327.34 L871.50,327.84 L872.00,328.28 L872.50,328.67 L873.00,329.00 L873.50,329.27 L874.00,329.48 L874.50,329.63 L875.00,329.72 L875.50,329.75 L876.00,329.72 L876.50,329.63 L877.00,329.48 L877.50,329.27 L878.00,329.00 L878.50,328.67 L879.00,328.28 L879.50,327.84 L880.00,327.34 L880.50,326.78 L881.00,326.17 L881.50,325.50 L882.00,324.78 L882.50,324.01 L883.00,323.19 L883.50,322.32 L884.00,321.40 L884.50,320.43 L885.00,319.43 L885.50,318.37 L886.00,317.28 L886.50,316.15 L887.00,314.98 L887.50,313.78 L888.00,312.54 L888.50,311.28 L889.00,309.98 L889.50,308.66 L890.00,307.31 L890.50,305.95 L891.00,304.56 L891.50,303.15 L892.00,301.73 L892.50,300.30 L893.00,298.86 L893.50,297.41 L894.00,295.96 L894.50,294.50" fill="none" stroke="#F07A8A" stroke-width="1.1" shape-rendering="crispEdges"/>
<g><rect x="133.5" y="286.5" width="4" height="4" fill="#000" stroke="#B0F0B4" shape-rendering="crispEdges"/><rect x="161.5" y="223.5" width="4" height="4" fill="#000" stroke="#B0F0B4" shape-rendering="crispEdges"/><rect x="179.5" y="366.5" width="4" height="4" fill="#000" stroke="#B0F0B4" shape-rendering="crispEdges"/><rect x="208.5" y="300.5" width="4" height="4" fill="#000" stroke="#B0F0B4" shape-rendering="crispEdges"/><rect x="236.5" y="208.5" width="4" height="4" fill="#000" stroke="#B0F0B4" shape-rendering="crispEdges"/><rect x="253.5" y="351.5" width="4" height="4" fill="#000" stroke="#B0F0B4" shape-rendering="crispEdges"/><rect x="282.5" y="315.5" width="4" height="4" fill="#000" stroke="#B0F0B4" shape-rendering="crispEdges"/><rect x="307.5" y="195.5" width="4" height="4" fill="#000" stroke="#B0F0B4" shape-rendering="crispEdges"/><rect x="327.5" y="337.5" width="4" height="4" fill="#000" stroke="#B0F0B4" shape-rendering="crispEdges"/><rect x="357.5" y="330.5" width="4" height="4" fill="#000" stroke="#B0F0B4" shape-rendering="crispEdges"/><rect x="379.5" y="189.5" width="4" height="4" fill="#000" stroke="#B0F0B4" shape-rendering="crispEdges"/><rect x="402.5" y="323.5" width="4" height="4" fill="#000" stroke="#B0F0B4" shape-rendering="crispEdges"/><rect x="431.5" y="343.5" width="4" height="4" fill="#000" stroke="#B0F0B4" shape-rendering="crispEdges"/><rect x="450.5" y="200.5" width="4" height="4" fill="#000" stroke="#B0F0B4" shape-rendering="crispEdges"/><rect x="477.5" y="311.5" width="4" height="4" fill="#000" stroke="#B0F0B4" shape-rendering="crispEdges"/><rect x="504.5" y="356.5" width="4" height="4" fill="#000" stroke="#B0F0B4" shape-rendering="crispEdges"/><rect x="524.5" y="214.5" width="4" height="4" fill="#000" stroke="#B0F0B4" shape-rendering="crispEdges"/><rect x="550.5" y="297.5" width="4" height="4" fill="#000" stroke="#B0F0B4" shape-rendering="crispEdges"/><rect x="578.5" y="370.5" width="4" height="4" fill="#000" stroke="#B0F0B4" shape-rendering="crispEdges"/><rect x="596.5" y="225.5" width="4" height="4" fill="#000" stroke="#B0F0B4" shape-rendering="crispEdges"/><rect x="625.5" y="281.5" width="4" height="4" fill="#000" stroke="#B0F0B4" shape-rendering="crispEdges"/><rect x="653.5" y="384.5" width="4" height="4" fill="#000" stroke="#B0F0B4" shape-rendering="crispEdges"/><rect x="670.5" y="241.5" width="4" height="4" fill="#000" stroke="#B0F0B4" shape-rendering="crispEdges"/><rect x="699.5" y="266.5" width="4" height="4" fill="#000" stroke="#B0F0B4" shape-rendering="crispEdges"/><rect x="724.5" y="397.5" width="4" height="4" fill="#000" stroke="#B0F0B4" shape-rendering="crispEdges"/><rect x="745.5" y="257.5" width="4" height="4" fill="#000" stroke="#B0F0B4" shape-rendering="crispEdges"/><rect x="774.5" y="252.5" width="4" height="4" fill="#000" stroke="#B0F0B4" shape-rendering="crispEdges"/><rect x="794.5" y="394.5" width="4" height="4" fill="#000" stroke="#B0F0B4" shape-rendering="crispEdges"/><rect x="820.5" y="271.5" width="4" height="4" fill="#000" stroke="#B0F0B4" shape-rendering="crispEdges"/><rect x="847.5" y="236.5" width="4" height="4" fill="#000" stroke="#B0F0B4" shape-rendering="crispEdges"/><rect x="865.5" y="379.5" width="4" height="4" fill="#000" stroke="#B0F0B4" shape-rendering="crispEdges"/><path d="M164.5 269.5 L166.5 271.5 L164.5 273.5 L162.5 271.5 Z" fill="#000" stroke="#F4B0B8" stroke-width="0.9"/><path d="M210.5 295.5 L212.5 297.5 L210.5 299.5 L208.5 297.5 Z" fill="#000" stroke="#F4B0B8" stroke-width="0.9"/><path d="M254.5 310.5 L256.5 312.5 L254.5 314.5 L252.5 312.5 Z" fill="#000" stroke="#F4B0B8" stroke-width="0.9"/><path d="M302.5 258.5 L304.5 260.5 L302.5 262.5 L300.5 260.5 Z" fill="#000" stroke="#F4B0B8" stroke-width="0.9"/><path d="M354.5 315.5 L356.5 317.5 L354.5 319.5 L352.5 317.5 Z" fill="#000" stroke="#F4B0B8" stroke-width="0.9"/><path d="M401.5 292.5 L403.5 294.5 L401.5 296.5 L399.5 294.5 Z" fill="#000" stroke="#F4B0B8" stroke-width="0.9"/><path d="M445.5 274.5 L447.5 276.5 L445.5 278.5 L443.5 276.5 Z" fill="#000" stroke="#F4B0B8" stroke-width="0.9"/><path d="M496.5 328.5 L498.5 330.5 L496.5 332.5 L494.5 330.5 Z" fill="#000" stroke="#F4B0B8" stroke-width="0.9"/><path d="M545.5 274.5 L547.5 276.5 L545.5 278.5 L543.5 276.5 Z" fill="#000" stroke="#F4B0B8" stroke-width="0.9"/><path d="M591.5 290.5 L593.5 292.5 L591.5 294.5 L589.5 292.5 Z" fill="#000" stroke="#F4B0B8" stroke-width="0.9"/><path d="M636.5 316.5 L638.5 318.5 L636.5 320.5 L634.5 318.5 Z" fill="#000" stroke="#F4B0B8" stroke-width="0.9"/><path d="M689.5 259.5 L691.5 261.5 L689.5 263.5 L687.5 261.5 Z" fill="#000" stroke="#F4B0B8" stroke-width="0.9"/><path d="M737.5 307.5 L739.5 309.5 L737.5 311.5 L735.5 309.5 Z" fill="#000" stroke="#F4B0B8" stroke-width="0.9"/><path d="M783.5 299.5 L785.5 301.5 L783.5 303.5 L781.5 301.5 Z" fill="#000" stroke="#F4B0B8" stroke-width="0.9"/><path d="M830.5 259.5 L832.5 261.5 L830.5 263.5 L828.5 261.5 Z" fill="#000" stroke="#F4B0B8" stroke-width="0.9"/><path d="M883.5 322.5 L885.5 324.5 L883.5 326.5 L881.5 324.5 Z" fill="#000" stroke="#F4B0B8" stroke-width="0.9"/></g>
<rect x="137.5" y="464.5" width="4" height="4" fill="none" stroke="#B0F0B4" shape-rendering="crispEdges"/>
<path d="M220 464 L222.5 466.5 L220 469 L217.5 466.5 Z" fill="none" stroke="#D87080"/>
</svg>
<div class="a plotlbl" style="left:88px;top:149px">4.0mV</div>
<div class="a plotlbl" style="left:112px;top:290px">0V</div>
<div class="a plotlbl" style="left:78px;top:431px">-4.0mV</div>
<div class="a plotlbl" style="left:128px;top:447px">0s</div>
<div class="a plotlbl" style="left:275px;top:447px">2ms</div>
<div class="a plotlbl" style="left:427px;top:447px">4ms</div>
<div class="a plotlbl" style="left:579px;top:447px">6ms</div>
<div class="a plotlbl" style="left:731px;top:447px">8ms</div>
<div class="a plotlbl" style="left:863px;top:447px">10ms</div>
<div class="a plotlbl" style="left:150px;top:461px;letter-spacing:0.6px">V(R1:2)</div>
<div class="a plotlbl" style="left:230px;top:461px;letter-spacing:0.6px">V(V4:+)</div>
<div class="a plotlbl" style="left:500px;top:476px">Time</div>


<!-- MDI tab -->
<div class="a" style="left:50px;top:495px;width:93px;height:24px;background:#E3E4D2;border-left:1px solid #FFF;border-right:1px solid #000;border-bottom:1px solid #000;border-radius:0 0 3px 3px"></div>
<svg class="a" style="left:55px;top:498px" width="14" height="17"><path d="M0.5 0.5 H9.5 L13.5 4.5 V16.5 H0.5 Z" fill="#0A140A" stroke="#1A3A1A"/><path d="M2 5.5 H4.5 V2.5 H8.5 V5.5 H12" stroke="#6ED86E" fill="none"/><path d="M1 7.5 H13" stroke="#58B858"/><path d="M2 9 L7 14 M7 9 L2 14 M7 12 Q9 9 12 12" stroke="#7EE07E" fill="none"/><path d="M1 15.5 H13" stroke="#58B858"/></svg>
<div class="a log" style="left:73px;top:500px">acsim.dat (a...</div>
<div class="a" style="left:37px;top:521px;width:879px;height:1px;background:#A8A698"></div>
<div class="a" style="left:4px;top:522px;width:912px;height:1px;background:#FFFFFF"></div>

<!-- bottom left pane -->
<div class="a" style="left:4px;top:528px;width:363px;height:130px;background:#E3E4D2;border:1px solid #8E8C80;border-left:none"></div>
<div class="a" style="left:4px;top:529px;width:18px;height:128px;background:linear-gradient(90deg,#ECECE6,#DCDCD6 60%,#CACAC2)"></div>
<div class="a" style="left:22px;top:531px;width:340px;height:122px;background:#fff;border:1px solid #8E8C80"></div>
<div class="a" style="left:9px;top:533px;width:11px;height:11px;background:linear-gradient(#FAFAFA,#DADAD2);border:1px solid #FFF;border-right-color:#808078;border-bottom-color:#808078"></div>
<svg class="a" style="left:10px;top:534px" width="9" height="9"><path d="M2 2 L7 7 M7 2 L2 7" stroke="#000" stroke-width="1.6"/></svg>
<div class="a" style="left:9px;top:545px;width:11px;height:11px;background:linear-gradient(#FAFAFA,#DADAD2);border:1px solid #FFF;border-right-color:#808078;border-bottom-color:#808078"></div>
<svg class="a" style="left:10px;top:546px" width="9" height="9"><path d="M6 1.5 V7.5 L3 4.5 Z" fill="#000"/></svg>
<div class="a log" style="left:42px;top:533px">Reading and checking circuit</div>
<div class="a log" style="left:42px;top:547px">Circuit read in and checked, no errors</div>
<div class="a log" style="left:42px;top:561px">Calculating bias point for Transient Analysis</div>
<div class="a log" style="left:42px;top:575px">Bias point calculated</div>
<div class="a log" style="left:42px;top:589px">Transient Analysis</div>
<div class="a log" style="left:42px;top:603px">Transient Analysis finished</div>
<div class="a log" style="left:42px;top:617px">Simulation complete</div>
<!-- vscroll -->
<div class="a" style="left:344px;top:533px;width:15px;height:102px;background:linear-gradient(90deg,#F3F1EC,#FEFEFB)"></div>
<div class="a" style="left:344px;top:534px;width:15px;height:15px;border:1px solid #BCCCF8;border-radius:2px;background:linear-gradient(135deg,#DCE6FE,#B8CCF8)"></div>
<svg class="a" style="left:347px;top:538px" width="9" height="7"><path d="M1 5 L4.5 1.5 L8 5" stroke="#4A5C8C" stroke-width="2" fill="none"/></svg>
<div class="a" style="left:344px;top:571px;width:15px;height:45px;border:1px solid #B4C4F4;border-radius:2px;background:linear-gradient(90deg,#C8D6FC,#B8CAF8)"></div>
<div class="a" style="left:348px;top:590px;width:7px;height:7px;background:repeating-linear-gradient(#EEF2FE 0 1px,#8EA2D8 1px 2px)"></div>
<div class="a" style="left:344px;top:618px;width:15px;height:15px;border:1px solid #BCCCF8;border-radius:2px;background:linear-gradient(135deg,#DCE6FE,#B8CCF8)"></div>
<svg class="a" style="left:347px;top:622px" width="9" height="7"><path d="M1 1.5 L4.5 5 L8 1.5" stroke="#4A5C8C" stroke-width="2" fill="none"/></svg>
<!-- hscroll -->
<div class="a" style="left:23px;top:635px;width:321px;height:15px;background:linear-gradient(#F3F1EC,#FEFEFB)"></div>
<div class="a" style="left:344px;top:635px;width:15px;height:16px;background:#E3E4D2"></div>
<div class="a" style="left:24px;top:635px;width:15px;height:15px;border:1px solid #BCCCF8;border-radius:2px;background:linear-gradient(135deg,#DCE6FE,#B8CCF8)"></div>
<svg class="a" style="left:28px;top:638px" width="7" height="9"><path d="M5 1 L1.5 4.5 L5 8" stroke="#4A5C8C" stroke-width="2" fill="none"/></svg>
<div class="a" style="left:41px;top:635px;width:115px;height:15px;border:1px solid #B4C4F4;border-radius:2px;background:linear-gradient(#C8D6FC,#B8CAF8)"></div>
<div class="a" style="left:95px;top:639px;width:7px;height:7px;background:repeating-linear-gradient(90deg,#EEF2FE 0 1px,#8EA2D8 1px 2px)"></div>
<div class="a" style="left:327px;top:635px;width:15px;height:15px;border:1px solid #BCCCF8;border-radius:2px;background:linear-gradient(135deg,#DCE6FE,#B8CCF8)"></div>
<svg class="a" style="left:331px;top:638px" width="7" height="9"><path d="M1.5 1 L5 4.5 L1.5 8" stroke="#4A5C8C" stroke-width="2" fill="none"/></svg>

<!-- right pane -->
<div class="a" style="left:375px;top:532px;width:17px;height:121px;background:linear-gradient(90deg,#ECECE6,#DCDCD6 55%,#BEBEB6)"></div>
<div class="a" style="left:377px;top:533px;width:11px;height:11px;background:linear-gradient(#FAFAFA,#DADAD2);border:1px solid #FFF;border-right-color:#808078;border-bottom-color:#808078"></div>
<svg class="a" style="left:378px;top:534px" width="9" height="9"><path d="M2 2 L7 7 M7 2 L2 7" stroke="#000" stroke-width="1.6"/></svg>
<div class="a" style="left:377px;top:545px;width:11px;height:11px;background:linear-gradient(#FAFAFA,#DADAD2);border:1px solid #FFF;border-right-color:#808078;border-bottom-color:#808078"></div>
<svg class="a" style="left:378px;top:546px" width="9" height="9"><path d="M6 1.5 V7.5 L3 4.5 Z" fill="#000"/></svg>
<div class="a" style="left:392px;top:531px;width:519px;height:1px;background:#7A786C"></div>
<div class="a" style="left:392px;top:532px;width:516px;height:104px;border:1px solid #9A988C;border-right-color:#FFF;border-bottom-color:#000"></div>
<div class="a" style="left:396px;top:536px;width:510px;height:98px;background:#fff;border:1px solid #8A8880;border-right-color:#D8D8D0;border-bottom-color:#D8D8D0"></div>
<div class="a" style="left:397px;top:537px;width:508px;height:20px;background:linear-gradient(#EBEADB,#E2E0D2);border-bottom:2px solid #D0CEC0"></div>
<div class="a" style="left:526px;top:540px;width:1px;height:15px;background:#C8C6B8;border-right:1px solid #FFF"></div>
<div class="a" style="left:711px;top:540px;width:1px;height:15px;background:#C8C6B8;border-right:1px solid #FFF"></div>
<div class="a" style="left:806px;top:540px;width:1px;height:15px;background:#C8C6B8;border-right:1px solid #FFF"></div>
<div class="a log" style="left:404px;top:587px">Time step =&nbsp; 491.1E-09</div>
<div class="a log" style="left:535px;top:587px">Time =&nbsp; .01</div>
<div class="a log" style="left:719px;top:587px">End =&nbsp; .01</div>
<div class="a" style="left:392px;top:636px;width:519px;height:1px;background:#000"></div>
<!-- tabs -->
<div class="a" style="left:395px;top:637px;width:14px;height:15px;border:1px solid #C8C6BC;background:#E3E4D2"></div>
<svg class="a" style="left:398px;top:640px" width="8" height="9"><path d="M6 1 V8 L2 4.5 Z" fill="#B8B6A8"/></svg>
<div class="a" style="left:411px;top:637px;width:14px;height:15px;border:1px solid #C8C6BC;background:#E3E4D2"></div>
<svg class="a" style="left:414px;top:640px" width="8" height="9"><path d="M2 1 V8 L6 4.5 Z" fill="#B8B6A8"/></svg>
<svg class="a" style="left:426px;top:636px" width="165" height="18"><path d="M104.5 0.5 L109 16.5 H155 L159.5 0.5" fill="#E3E4D2" stroke="#000"/><path d="M58 0.5 L62.5 16.5 H100.5 L105 0.5" fill="#E3E4D2" stroke="#000"/><path d="M3 0.5 L7.5 16.5 H53.5 L58 0.5" fill="#FFFFFF" stroke="#000"/><path d="M3 0.5 H159.5" stroke="#000"/></svg>
<div class="a log" style="left:436px;top:638px">Analysis</div>
<div class="a log" style="left:490px;top:638px">Watch</div>
<div class="a log" style="left:537px;top:638px">Devices</div>

<!-- status bar -->
<div class="a" style="left:367px;top:655px;width:549px;height:1px;background:#F6F6EC"></div>
<div class="a" style="left:386px;top:662px;width:1px;height:15px;background:#B8B6A8"></div>
<div class="a log" style="left:6px;top:663px">For Help, press F1</div>
<div class="a" style="left:544px;top:662px;width:1px;height:15px;background:#B8B6A8"></div>
<div class="a" style="left:702px;top:662px;width:1px;height:15px;background:#B8B6A8"></div>
<div class="a" style="left:748px;top:662px;width:1px;height:15px;background:#B8B6A8"></div>
<div class="a" style="left:894px;top:662px;width:1px;height:15px;background:#B8B6A8"></div>
<div class="a log" style="left:549px;top:663px">Time= .01</div>
<div class="a log" style="left:709px;top:663px">100%</div>
<div class="a" style="left:753px;top:662px;width:105px;height:15px;border:1px solid #6A6A6A;border-radius:3px;background:#F4F8F4"></div>
<div class="a" style="left:756px;top:664px;width:99px;height:11px;background:linear-gradient(#C8F0C8,#60D060 30%,#38C038 60%,#A0E4A0)"></div>
<div class="a" style="left:756px;top:664px;width:99px;height:11px;background:repeating-linear-gradient(90deg,transparent 0 6px,#E4F6E4 6px 8px)"></div>
<svg class="a" style="left:859px;top:661px" width="22" height="16"><path d="M1 13 L5 6 L8 11 L11 5 L14 12 L17 5 L20 9" stroke="#0A3A5A" stroke-width="2.6" fill="none"/><path d="M1 13 L5 6 L8 11 L11 5 L14 12 L17 5 L20 9" stroke="#30C8F0" stroke-width="1.4" stroke-dasharray="2,1" fill="none"/></svg>
<svg class="a" style="left:902px;top:665px" width="12" height="12"><g fill="#B8B6A8"><rect x="9" y="1" width="2" height="2"/><rect x="6" y="4" width="2" height="2"/><rect x="9" y="4" width="2" height="2"/><rect x="3" y="7" width="2" height="2"/><rect x="6" y="7" width="2" height="2"/><rect x="9" y="7" width="2" height="2"/></g></svg>
<div class="a" style="left:4px;top:30px;width:1px;height:648px;background:#EEF4F8"></div>


</body></html>
